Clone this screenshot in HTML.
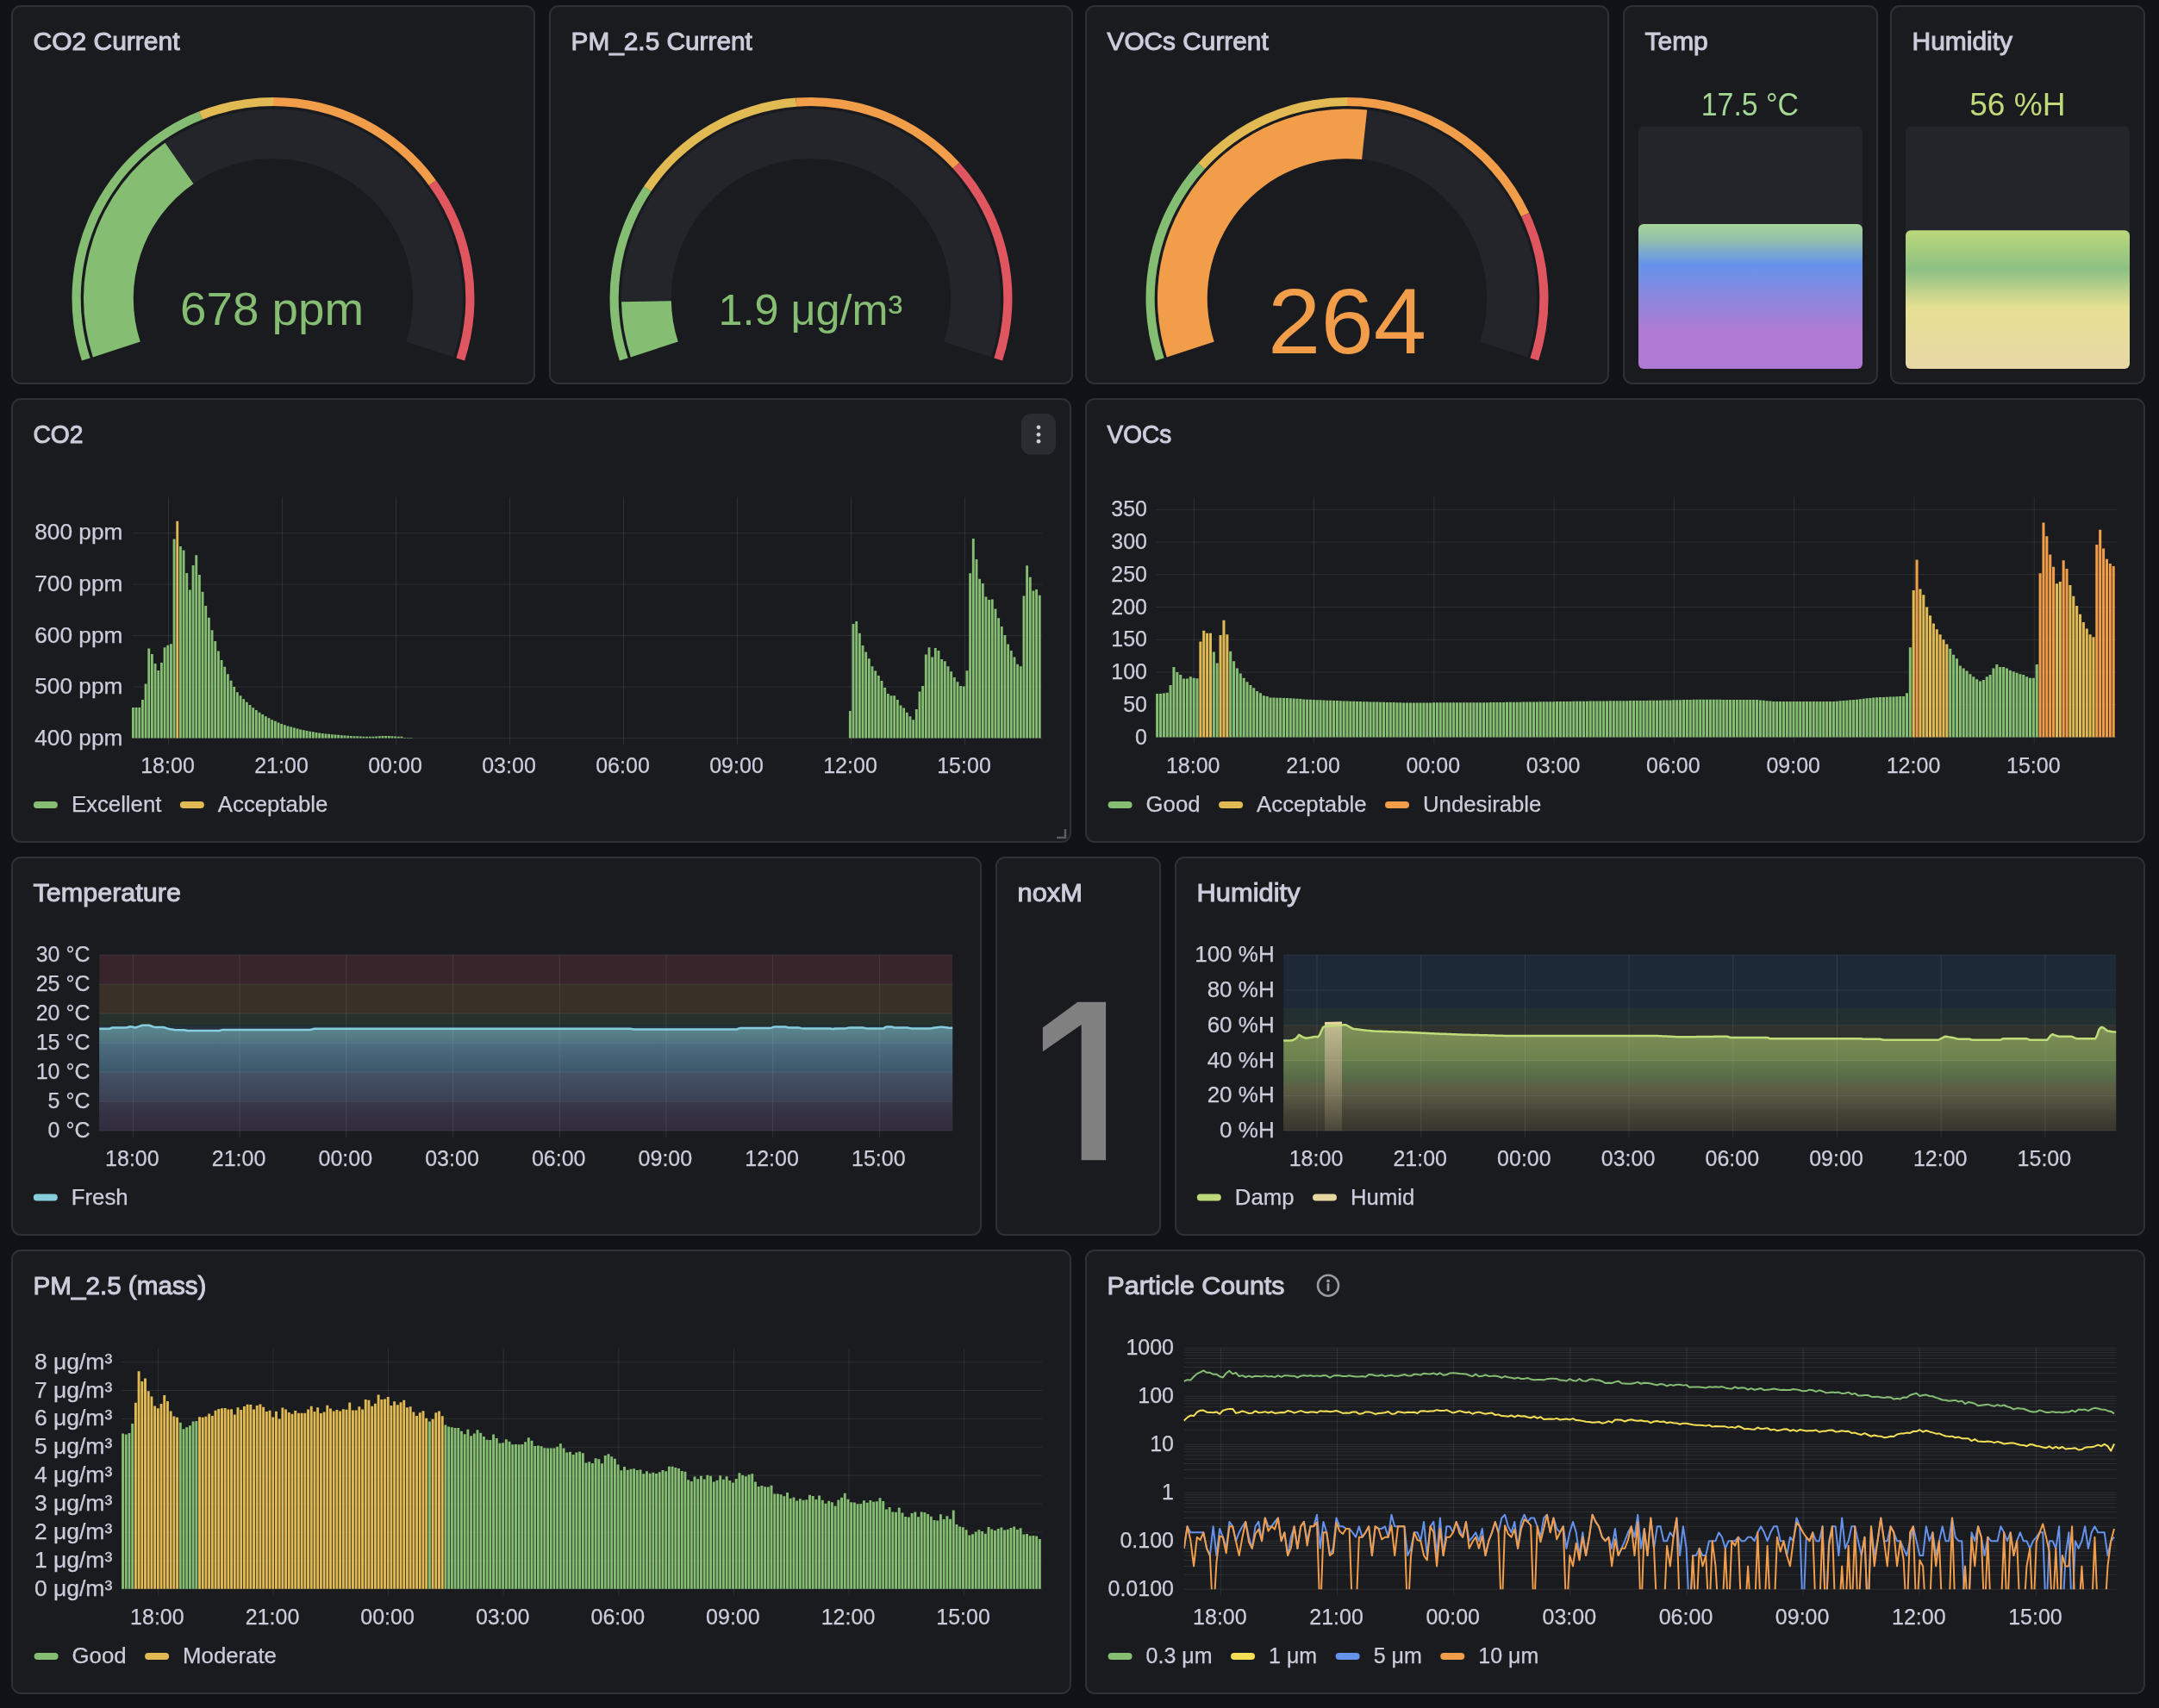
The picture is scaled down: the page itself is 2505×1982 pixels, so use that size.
<!DOCTYPE html><html><head><meta charset="utf-8"><title>Dashboard</title><style>html,body{margin:0;padding:0;background:#111217;width:2505px;height:1982px;overflow:hidden}svg{display:block;will-change:transform}</style></head><body><svg width="2505" height="1982" viewBox="0 0 2505 1982" font-family="Liberation Sans, sans-serif">
<defs>
<style>.t{stroke:#ccccdb;stroke-width:1px}.a{stroke:#ccccdb;stroke-width:0.25px}</style>
<linearGradient id="gTemp" x1="0" y1="0" x2="0" y2="1"><stop offset="0" stop-color="#a8d597"/><stop offset="0.12" stop-color="#8fbcaf"/><stop offset="0.2" stop-color="#78a8d0"/><stop offset="0.28" stop-color="#6592eb"/><stop offset="0.47" stop-color="#8589df"/><stop offset="0.74" stop-color="#af7ad3"/><stop offset="1" stop-color="#af7ad3"/></linearGradient>
<linearGradient id="gHum" x1="0" y1="0" x2="0" y2="1"><stop offset="0" stop-color="#bcd87a"/><stop offset="0.28" stop-color="#8cc083"/><stop offset="0.56" stop-color="#e6e093"/><stop offset="1" stop-color="#e8d7a6"/></linearGradient>
</defs>
<rect width="2505" height="1982" fill="#111217"/>
<rect x="14" y="7" width="606" height="438" rx="10" fill="#191b1f" stroke="#2e3036" stroke-width="2"/>
<text x="38.5" y="58.3" font-size="29.5" fill="#ccccdb" textLength="170" lengthAdjust="spacingAndGlyphs" class="t">CO2 Current</text>
<rect x="638" y="7" width="606" height="438" rx="10" fill="#191b1f" stroke="#2e3036" stroke-width="2"/>
<text x="662.5" y="58.3" font-size="29.5" fill="#ccccdb" textLength="210.4" lengthAdjust="spacingAndGlyphs" class="t">PM_2.5 Current</text>
<rect x="1260" y="7" width="606" height="438" rx="10" fill="#191b1f" stroke="#2e3036" stroke-width="2"/>
<text x="1284.5" y="58.3" font-size="29.5" fill="#ccccdb" textLength="187.2" lengthAdjust="spacingAndGlyphs" class="t">VOCs Current</text>
<rect x="1884" y="7" width="294" height="438" rx="10" fill="#191b1f" stroke="#2e3036" stroke-width="2"/>
<text x="1908.5" y="58.3" font-size="29.5" fill="#ccccdb" textLength="73.28" lengthAdjust="spacingAndGlyphs" class="t">Temp</text>
<rect x="2194" y="7" width="294" height="438" rx="10" fill="#191b1f" stroke="#2e3036" stroke-width="2"/>
<text x="2218.5" y="58.3" font-size="29.5" fill="#ccccdb" textLength="116.55" lengthAdjust="spacingAndGlyphs" class="t">Humidity</text>
<path d="M94.93 418.56A233.5 233.5 0 0 1 231.04 129.3L234.8 138.78A223.3 223.3 0 0 0 104.63 415.4Z" fill="#85bd72"/>
<path d="M231.04 129.3A233.5 233.5 0 0 1 317 112.9L317 123.1A223.3 223.3 0 0 0 234.8 138.78Z" fill="#e2ba53"/>
<path d="M317 112.9A233.5 233.5 0 0 1 505.91 209.15L497.65 215.15A223.3 223.3 0 0 0 317 123.1Z" fill="#f19d49"/>
<path d="M505.91 209.15A233.5 233.5 0 0 1 539.07 418.56L529.37 415.4A223.3 223.3 0 0 0 497.65 215.15Z" fill="#e05660"/>
<path d="M107.77 414.38A220 220 0 1 1 526.23 414.38L471.26 396.52A162.2 162.2 0 1 0 162.74 396.52Z" fill="#23252a"/>
<path d="M107.77 414.38A220 220 0 0 1 191.52 165.69L224.49 213.17A162.2 162.2 0 0 0 162.74 396.52Z" fill="#85bd72"/>
<text x="315.6" y="376.9" font-size="54" fill="#85bd72" text-anchor="middle" textLength="213" lengthAdjust="spacingAndGlyphs">678 ppm</text>
<path d="M718.93 418.56A233.5 233.5 0 0 1 747.06 216.37L755.53 222.05A223.3 223.3 0 0 0 728.63 415.4Z" fill="#85bd72"/>
<path d="M747.06 216.37A233.5 233.5 0 0 1 923.41 113.56L924.18 123.73A223.3 223.3 0 0 0 755.53 222.05Z" fill="#e2ba53"/>
<path d="M923.41 113.56A233.5 233.5 0 0 1 1113.21 188.71L1105.69 195.6A223.3 223.3 0 0 0 924.18 123.73Z" fill="#f19d49"/>
<path d="M1113.21 188.71A233.5 233.5 0 0 1 1163.07 418.56L1153.37 415.4A223.3 223.3 0 0 0 1105.69 195.6Z" fill="#e05660"/>
<path d="M731.77 414.38A220 220 0 1 1 1150.23 414.38L1095.26 396.52A162.2 162.2 0 1 0 786.74 396.52Z" fill="#23252a"/>
<path d="M731.77 414.38A220 220 0 0 1 721.03 350.24L778.82 349.23A162.2 162.2 0 0 0 786.74 396.52Z" fill="#85bd72"/>
<text x="940.3" y="377.2" font-size="49.6" fill="#85bd72" text-anchor="middle" textLength="213.8" lengthAdjust="spacingAndGlyphs">1.9 μg/m³</text>
<path d="M1340.93 418.56A233.5 233.5 0 0 1 1390.2 189.36L1397.75 196.22A223.3 223.3 0 0 0 1350.63 415.4Z" fill="#85bd72"/>
<path d="M1390.2 189.36A233.5 233.5 0 0 1 1563 112.9L1563 123.1A223.3 223.3 0 0 0 1397.75 196.22Z" fill="#e2ba53"/>
<path d="M1563 112.9A233.5 233.5 0 0 1 1774.28 246.98L1765.05 251.32A223.3 223.3 0 0 0 1563 123.1Z" fill="#f19d49"/>
<path d="M1774.28 246.98A233.5 233.5 0 0 1 1785.07 418.56L1775.37 415.4A223.3 223.3 0 0 0 1765.05 251.32Z" fill="#e05660"/>
<path d="M1353.77 414.38A220 220 0 1 1 1772.23 414.38L1717.26 396.52A162.2 162.2 0 1 0 1408.74 396.52Z" fill="#23252a"/>
<path d="M1353.77 414.38A220 220 0 0 1 1586.18 127.62L1580.09 185.1A162.2 162.2 0 0 0 1408.74 396.52Z" fill="#f19d49"/>
<text x="1563.1" y="410" font-size="106.7" fill="#f19d49" text-anchor="middle" textLength="184" lengthAdjust="spacingAndGlyphs">264</text>
<rect x="1901" y="146.5" width="260" height="281.5" rx="6" fill="#23252a"/>
<rect x="1901" y="260" width="260" height="168" rx="6" fill="url(#gTemp)"/>
<text x="2030.4" y="133.9" font-size="37.5" fill="#a5d794" text-anchor="middle" textLength="113.2" lengthAdjust="spacingAndGlyphs">17.5 °C</text>
<rect x="2211" y="146.5" width="260" height="281.5" rx="6" fill="#23252a"/>
<rect x="2211" y="267.2" width="260" height="160.8" rx="6" fill="url(#gHum)"/>
<text x="2340.9" y="133.9" font-size="37.5" fill="#c0d97a" text-anchor="middle" textLength="111.4" lengthAdjust="spacingAndGlyphs">56 %H</text>
<rect x="14" y="463" width="1228" height="514" rx="10" fill="#191b1f" stroke="#2e3036" stroke-width="2"/>
<text x="38.5" y="514.3" font-size="29.5" fill="#ccccdb" textLength="58" lengthAdjust="spacingAndGlyphs" class="t">CO2</text>
<line x1="153.5" y1="618.48" x2="1209" y2="618.48" stroke="rgba(240,250,255,0.09)" stroke-width="1"/>
<text x="142.4" y="626.48" font-size="25" fill="#ccccdb" text-anchor="end" textLength="102.18" lengthAdjust="spacingAndGlyphs" class="a">800 ppm</text>
<line x1="153.5" y1="678.01" x2="1209" y2="678.01" stroke="rgba(240,250,255,0.09)" stroke-width="1"/>
<text x="142.4" y="686.01" font-size="25" fill="#ccccdb" text-anchor="end" textLength="102.18" lengthAdjust="spacingAndGlyphs" class="a">700 ppm</text>
<line x1="153.5" y1="737.54" x2="1209" y2="737.54" stroke="rgba(240,250,255,0.09)" stroke-width="1"/>
<text x="142.4" y="745.54" font-size="25" fill="#ccccdb" text-anchor="end" textLength="102.18" lengthAdjust="spacingAndGlyphs" class="a">600 ppm</text>
<line x1="153.5" y1="797.07" x2="1209" y2="797.07" stroke="rgba(240,250,255,0.09)" stroke-width="1"/>
<text x="142.4" y="805.07" font-size="25" fill="#ccccdb" text-anchor="end" textLength="102.18" lengthAdjust="spacingAndGlyphs" class="a">500 ppm</text>
<line x1="153.5" y1="856.6" x2="1209" y2="856.6" stroke="rgba(240,250,255,0.09)" stroke-width="1"/>
<text x="142.4" y="864.6" font-size="25" fill="#ccccdb" text-anchor="end" textLength="102.18" lengthAdjust="spacingAndGlyphs" class="a">400 ppm</text>
<line x1="195.5" y1="576.8" x2="195.5" y2="864.1" stroke="rgba(240,250,255,0.09)" stroke-width="1"/>
<text x="194.5" y="897.2" font-size="25" fill="#ccccdb" text-anchor="middle" class="a">18:00</text>
<line x1="327.5" y1="576.8" x2="327.5" y2="864.1" stroke="rgba(240,250,255,0.09)" stroke-width="1"/>
<text x="326.5" y="897.2" font-size="25" fill="#ccccdb" text-anchor="middle" class="a">21:00</text>
<line x1="459.5" y1="576.8" x2="459.5" y2="864.1" stroke="rgba(240,250,255,0.09)" stroke-width="1"/>
<text x="458.5" y="897.2" font-size="25" fill="#ccccdb" text-anchor="middle" class="a">00:00</text>
<line x1="591.5" y1="576.8" x2="591.5" y2="864.1" stroke="rgba(240,250,255,0.09)" stroke-width="1"/>
<text x="590.5" y="897.2" font-size="25" fill="#ccccdb" text-anchor="middle" class="a">03:00</text>
<line x1="723.5" y1="576.8" x2="723.5" y2="864.1" stroke="rgba(240,250,255,0.09)" stroke-width="1"/>
<text x="722.5" y="897.2" font-size="25" fill="#ccccdb" text-anchor="middle" class="a">06:00</text>
<line x1="855.5" y1="576.8" x2="855.5" y2="864.1" stroke="rgba(240,250,255,0.09)" stroke-width="1"/>
<text x="854.5" y="897.2" font-size="25" fill="#ccccdb" text-anchor="middle" class="a">09:00</text>
<line x1="987.5" y1="576.8" x2="987.5" y2="864.1" stroke="rgba(240,250,255,0.09)" stroke-width="1"/>
<text x="986.5" y="897.2" font-size="25" fill="#ccccdb" text-anchor="middle" class="a">12:00</text>
<line x1="1119.5" y1="576.8" x2="1119.5" y2="864.1" stroke="rgba(240,250,255,0.09)" stroke-width="1"/>
<text x="1118.5" y="897.2" font-size="25" fill="#ccccdb" text-anchor="middle" class="a">15:00</text>
<path d="M153 821.06h2.86V856.6h-2.86zM156.66 820.88h2.86V856.6h-2.86zM160.33 820.88h2.86V856.6h-2.86zM163.99 811.95h2.86V856.6h-2.86zM167.66 793.5h2.86V856.6h-2.86zM171.32 752.42h2.86V856.6h-2.86zM174.99 758.97h2.86V856.6h-2.86zM178.65 769.98h2.86V856.6h-2.86zM182.32 778.02h2.86V856.6h-2.86zM185.98 769.09h2.86V856.6h-2.86zM189.65 751.23h2.86V856.6h-2.86zM193.31 748.85h2.86V856.6h-2.86zM196.98 747.36h2.86V856.6h-2.86zM200.64 625.62h2.86V856.6h-2.86zM207.97 633.96h2.86V856.6h-2.86zM211.64 638.42h2.86V856.6h-2.86zM215.3 664.91h2.86V856.6h-2.86zM218.97 684.56h2.86V856.6h-2.86zM222.63 655.98h2.86V856.6h-2.86zM226.3 644.32h2.86V856.6h-2.86zM229.96 666.94h2.86V856.6h-2.86zM233.63 686.64h2.86V856.6h-2.86zM237.29 703.01h2.86V856.6h-2.86zM240.96 716.7h2.86V856.6h-2.86zM244.62 731.23h2.86V856.6h-2.86zM248.29 744.09h2.86V856.6h-2.86zM251.95 755.4h2.86V856.6h-2.86zM255.62 766.11h2.86V856.6h-2.86zM259.28 773.85h2.86V856.6h-2.86zM262.95 782.19h2.86V856.6h-2.86zM266.61 789.63h2.86V856.6h-2.86zM270.28 797.07h2.86V856.6h-2.86zM273.94 803.14h2.86V856.6h-2.86zM277.61 807.19h2.86V856.6h-2.86zM281.27 811.14h2.86V856.6h-2.86zM284.94 814.78h2.86V856.6h-2.86zM288.6 818.12h2.86V856.6h-2.86zM292.27 821.2h2.86V856.6h-2.86zM295.93 824.03h2.86V856.6h-2.86zM299.6 826.63h2.86V856.6h-2.86zM303.26 829.03h2.86V856.6h-2.86zM306.93 831.23h2.86V856.6h-2.86zM310.59 833.26h2.86V856.6h-2.86zM314.26 835.13h2.86V856.6h-2.86zM317.92 836.84h2.86V856.6h-2.86zM321.59 838.42h2.86V856.6h-2.86zM325.25 839.88h2.86V856.6h-2.86zM328.92 841.21h2.86V856.6h-2.86zM332.58 842.44h2.86V856.6h-2.86zM336.25 843.58h2.86V856.6h-2.86zM339.91 844.62h2.86V856.6h-2.86zM343.58 845.58h2.86V856.6h-2.86zM347.24 846.46h2.86V856.6h-2.86zM350.91 847.27h2.86V856.6h-2.86zM354.57 848.01h2.86V856.6h-2.86zM358.24 848.7h2.86V856.6h-2.86zM361.9 849.33h2.86V856.6h-2.86zM365.57 849.91h2.86V856.6h-2.86zM369.23 850.45h2.86V856.6h-2.86zM372.9 850.94h2.86V856.6h-2.86zM376.56 851.39h2.86V856.6h-2.86zM380.23 851.81h2.86V856.6h-2.86zM383.89 852.19h2.86V856.6h-2.86zM387.56 852.54h2.86V856.6h-2.86zM391.22 852.87h2.86V856.6h-2.86zM394.89 853.17h2.86V856.6h-2.86zM398.55 853.44h2.86V856.6h-2.86zM402.22 853.69h2.86V856.6h-2.86zM405.88 853.93h2.86V856.6h-2.86zM409.55 854.14h2.86V856.6h-2.86zM413.21 854.34h2.86V856.6h-2.86zM416.88 854.52h2.86V856.6h-2.86zM420.54 854.68h2.86V856.6h-2.86zM424.2 854.84h2.86V856.6h-2.86zM427.87 854.81h2.86V856.6h-2.86zM431.53 854.64h2.86V856.6h-2.86zM435.2 854.46h2.86V856.6h-2.86zM438.86 854.28h2.86V856.6h-2.86zM442.53 854.1h2.86V856.6h-2.86zM446.19 853.92h2.86V856.6h-2.86zM449.86 854.1h2.86V856.6h-2.86zM453.52 854.28h2.86V856.6h-2.86zM457.19 854.46h2.86V856.6h-2.86zM460.85 854.64h2.86V856.6h-2.86zM464.52 854.81h2.86V856.6h-2.86zM468.18 855.95h2.86V856.6h-2.86zM471.85 856h2.86V856.6h-2.86zM475.51 856.05h2.86V856.6h-2.86zM984.94 825.05h2.86V856.6h-2.86zM988.6 724.03h2.86V856.6h-2.86zM992.27 720.99h2.86V856.6h-2.86zM995.93 734.74h2.86V856.6h-2.86zM999.6 748.97h2.86V856.6h-2.86zM1003.26 756.59h2.86V856.6h-2.86zM1006.93 764.33h2.86V856.6h-2.86zM1010.59 773.26h2.86V856.6h-2.86zM1014.26 778.62h2.86V856.6h-2.86zM1017.92 783.97h2.86V856.6h-2.86zM1021.59 789.93h2.86V856.6h-2.86zM1025.25 797.96h2.86V856.6h-2.86zM1028.92 804.99h2.86V856.6h-2.86zM1032.58 807.19h2.86V856.6h-2.86zM1036.25 807.19h2.86V856.6h-2.86zM1039.91 811.95h2.86V856.6h-2.86zM1043.58 818.5h2.86V856.6h-2.86zM1047.24 821.48h2.86V856.6h-2.86zM1050.91 826.84h2.86V856.6h-2.86zM1054.57 831.18h2.86V856.6h-2.86zM1058.24 835.17h2.86V856.6h-2.86zM1061.9 822.97h2.86V856.6h-2.86zM1065.57 802.43h2.86V856.6h-2.86zM1069.23 795.88h2.86V856.6h-2.86zM1072.9 759.57h2.86V856.6h-2.86zM1076.56 751.23h2.86V856.6h-2.86zM1080.23 762.54h2.86V856.6h-2.86zM1083.89 751.95h2.86V856.6h-2.86zM1087.56 755.04h2.86V856.6h-2.86zM1091.22 764.92h2.86V856.6h-2.86zM1094.89 767.31h2.86V856.6h-2.86zM1098.55 773.26h2.86V856.6h-2.86zM1102.22 779.21h2.86V856.6h-2.86zM1105.88 785.88h2.86V856.6h-2.86zM1109.55 791.3h2.86V856.6h-2.86zM1113.21 795.88h2.86V856.6h-2.86zM1116.88 796.47h2.86V856.6h-2.86zM1120.54 778.26h2.86V856.6h-2.86zM1124.21 665.21h2.86V856.6h-2.86zM1127.87 625.03h2.86V856.6h-2.86zM1131.54 649.02h2.86V856.6h-2.86zM1135.2 671.7h2.86V856.6h-2.86zM1138.87 677h2.86V856.6h-2.86zM1142.53 692.42h2.86V856.6h-2.86zM1146.2 695.99h2.86V856.6h-2.86zM1149.86 695.45h2.86V856.6h-2.86zM1153.53 706.58h2.86V856.6h-2.86zM1157.19 717.3h2.86V856.6h-2.86zM1160.86 726.94h2.86V856.6h-2.86zM1164.52 736.94h2.86V856.6h-2.86zM1168.19 747.42h2.86V856.6h-2.86zM1171.85 755.04h2.86V856.6h-2.86zM1175.52 762.54h2.86V856.6h-2.86zM1179.18 770.7h2.86V856.6h-2.86zM1182.85 773.14h2.86V856.6h-2.86zM1186.51 691.52h2.86V856.6h-2.86zM1190.18 656.22h2.86V856.6h-2.86zM1193.84 669.79h2.86V856.6h-2.86zM1197.51 685.51h2.86V856.6h-2.86zM1201.17 683.96h2.86V856.6h-2.86zM1204.84 690.63h2.86V856.6h-2.86z" fill="#85bd72"/>
<path d="M204.31 604.79h2.86V856.6h-2.86z" fill="#e2ba53"/>
<rect x="38.9" y="930" width="28" height="8" rx="4" fill="#85bd72"/>
<text x="82.9" y="942.3" font-size="25" fill="#ccccdb" textLength="104.48" lengthAdjust="spacingAndGlyphs" class="a">Excellent</text>
<rect x="208.88" y="930" width="28" height="8" rx="4" fill="#e2ba53"/>
<text x="252.88" y="942.3" font-size="25" fill="#ccccdb" textLength="127.41" lengthAdjust="spacingAndGlyphs" class="a">Acceptable</text>
<rect x="1185" y="480" width="40" height="47.6" rx="11" fill="#2b2c32"/>
<circle cx="1205" cy="495.8" r="2.4" fill="#ccccdb"/>
<circle cx="1205" cy="504.3" r="2.4" fill="#ccccdb"/>
<circle cx="1205" cy="512.2" r="2.4" fill="#ccccdb"/>
<path d="M1236 962v10h-10" fill="none" stroke="#5a5c63" stroke-width="2.5"/>
<rect x="1260" y="463" width="1228" height="514" rx="10" fill="#191b1f" stroke="#2e3036" stroke-width="2"/>
<text x="1284.5" y="514.3" font-size="29.5" fill="#ccccdb" textLength="74.7" lengthAdjust="spacingAndGlyphs" class="t">VOCs</text>
<line x1="1341.1" y1="591.32" x2="2455.5" y2="591.32" stroke="rgba(240,250,255,0.09)" stroke-width="1"/>
<text x="1331" y="599.32" font-size="25" fill="#ccccdb" text-anchor="end" textLength="41.72" lengthAdjust="spacingAndGlyphs" class="a">350</text>
<line x1="1341.1" y1="629.06" x2="2455.5" y2="629.06" stroke="rgba(240,250,255,0.09)" stroke-width="1"/>
<text x="1331" y="637.06" font-size="25" fill="#ccccdb" text-anchor="end" textLength="41.72" lengthAdjust="spacingAndGlyphs" class="a">300</text>
<line x1="1341.1" y1="666.8" x2="2455.5" y2="666.8" stroke="rgba(240,250,255,0.09)" stroke-width="1"/>
<text x="1331" y="674.8" font-size="25" fill="#ccccdb" text-anchor="end" textLength="41.72" lengthAdjust="spacingAndGlyphs" class="a">250</text>
<line x1="1341.1" y1="704.54" x2="2455.5" y2="704.54" stroke="rgba(240,250,255,0.09)" stroke-width="1"/>
<text x="1331" y="712.54" font-size="25" fill="#ccccdb" text-anchor="end" textLength="41.72" lengthAdjust="spacingAndGlyphs" class="a">200</text>
<line x1="1341.1" y1="742.28" x2="2455.5" y2="742.28" stroke="rgba(240,250,255,0.09)" stroke-width="1"/>
<text x="1331" y="750.28" font-size="25" fill="#ccccdb" text-anchor="end" textLength="41.72" lengthAdjust="spacingAndGlyphs" class="a">150</text>
<line x1="1341.1" y1="780.02" x2="2455.5" y2="780.02" stroke="rgba(240,250,255,0.09)" stroke-width="1"/>
<text x="1331" y="788.02" font-size="25" fill="#ccccdb" text-anchor="end" textLength="41.72" lengthAdjust="spacingAndGlyphs" class="a">100</text>
<line x1="1341.1" y1="817.76" x2="2455.5" y2="817.76" stroke="rgba(240,250,255,0.09)" stroke-width="1"/>
<text x="1331" y="825.76" font-size="25" fill="#ccccdb" text-anchor="end" textLength="27.81" lengthAdjust="spacingAndGlyphs" class="a">50</text>
<line x1="1341.1" y1="855.5" x2="2455.5" y2="855.5" stroke="rgba(240,250,255,0.09)" stroke-width="1"/>
<text x="1331" y="863.5" font-size="25" fill="#ccccdb" text-anchor="end" textLength="13.91" lengthAdjust="spacingAndGlyphs" class="a">0</text>
<line x1="1385.2" y1="576.8" x2="1385.2" y2="863" stroke="rgba(240,250,255,0.09)" stroke-width="1"/>
<text x="1384.2" y="897.2" font-size="25" fill="#ccccdb" text-anchor="middle" class="a">18:00</text>
<line x1="1524.5" y1="576.8" x2="1524.5" y2="863" stroke="rgba(240,250,255,0.09)" stroke-width="1"/>
<text x="1523.5" y="897.2" font-size="25" fill="#ccccdb" text-anchor="middle" class="a">21:00</text>
<line x1="1663.8" y1="576.8" x2="1663.8" y2="863" stroke="rgba(240,250,255,0.09)" stroke-width="1"/>
<text x="1662.8" y="897.2" font-size="25" fill="#ccccdb" text-anchor="middle" class="a">00:00</text>
<line x1="1803.1" y1="576.8" x2="1803.1" y2="863" stroke="rgba(240,250,255,0.09)" stroke-width="1"/>
<text x="1802.1" y="897.2" font-size="25" fill="#ccccdb" text-anchor="middle" class="a">03:00</text>
<line x1="1942.4" y1="576.8" x2="1942.4" y2="863" stroke="rgba(240,250,255,0.09)" stroke-width="1"/>
<text x="1941.4" y="897.2" font-size="25" fill="#ccccdb" text-anchor="middle" class="a">06:00</text>
<line x1="2081.7" y1="576.8" x2="2081.7" y2="863" stroke="rgba(240,250,255,0.09)" stroke-width="1"/>
<text x="2080.7" y="897.2" font-size="25" fill="#ccccdb" text-anchor="middle" class="a">09:00</text>
<line x1="2221" y1="576.8" x2="2221" y2="863" stroke="rgba(240,250,255,0.09)" stroke-width="1"/>
<text x="2220" y="897.2" font-size="25" fill="#ccccdb" text-anchor="middle" class="a">12:00</text>
<line x1="2360.3" y1="576.8" x2="2360.3" y2="863" stroke="rgba(240,250,255,0.09)" stroke-width="1"/>
<text x="2359.3" y="897.2" font-size="25" fill="#ccccdb" text-anchor="middle" class="a">15:00</text>
<path d="M1341.1 804.93h3.07V855.5h-3.07zM1344.97 804.93h3.07V855.5h-3.07zM1348.83 804.55h3.07V855.5h-3.07zM1352.7 803.8h3.07V855.5h-3.07zM1356.56 795.12h3.07V855.5h-3.07zM1360.43 773.98h3.07V855.5h-3.07zM1364.3 780.02h3.07V855.5h-3.07zM1368.16 783.04h3.07V855.5h-3.07zM1372.03 787.57h3.07V855.5h-3.07zM1375.89 787.57h3.07V855.5h-3.07zM1379.76 785.3h3.07V855.5h-3.07zM1383.63 786.81h3.07V855.5h-3.07zM1387.49 787.19h3.07V855.5h-3.07zM1406.82 756.62h3.07V855.5h-3.07zM1410.69 769.45h3.07V855.5h-3.07zM1426.15 755.87h3.07V855.5h-3.07zM1430.02 767.19h3.07V855.5h-3.07zM1433.88 775.49h3.07V855.5h-3.07zM1437.75 781.53h3.07V855.5h-3.07zM1441.62 786.81h3.07V855.5h-3.07zM1445.48 791.34h3.07V855.5h-3.07zM1449.35 795.12h3.07V855.5h-3.07zM1453.21 798.14h3.07V855.5h-3.07zM1457.08 801.91h3.07V855.5h-3.07zM1460.95 804.17h3.07V855.5h-3.07zM1464.81 807.19h3.07V855.5h-3.07zM1468.68 807.95h3.07V855.5h-3.07zM1472.54 809.46h3.07V855.5h-3.07zM1476.41 809.58h3.07V855.5h-3.07zM1480.27 809.71h3.07V855.5h-3.07zM1484.14 809.83h3.07V855.5h-3.07zM1488.01 809.96h3.07V855.5h-3.07zM1491.87 810.09h3.07V855.5h-3.07zM1495.74 810.21h3.07V855.5h-3.07zM1499.6 810.51h3.07V855.5h-3.07zM1503.47 810.82h3.07V855.5h-3.07zM1507.34 811.12h3.07V855.5h-3.07zM1511.2 811.42h3.07V855.5h-3.07zM1515.07 811.72h3.07V855.5h-3.07zM1518.93 811.87h3.07V855.5h-3.07zM1522.8 812.02h3.07V855.5h-3.07zM1526.67 812.17h3.07V855.5h-3.07zM1530.53 812.33h3.07V855.5h-3.07zM1534.4 812.48h3.07V855.5h-3.07zM1538.26 812.63h3.07V855.5h-3.07zM1542.13 812.78h3.07V855.5h-3.07zM1546 812.93h3.07V855.5h-3.07zM1549.86 813.08h3.07V855.5h-3.07zM1553.73 813.23h3.07V855.5h-3.07zM1557.59 813.38h3.07V855.5h-3.07zM1561.46 813.53h3.07V855.5h-3.07zM1565.33 813.68h3.07V855.5h-3.07zM1569.19 813.84h3.07V855.5h-3.07zM1573.06 813.99h3.07V855.5h-3.07zM1576.92 814.09h3.07V855.5h-3.07zM1580.79 814.19h3.07V855.5h-3.07zM1584.66 814.29h3.07V855.5h-3.07zM1588.52 814.39h3.07V855.5h-3.07zM1592.39 814.49h3.07V855.5h-3.07zM1596.25 814.59h3.07V855.5h-3.07zM1600.12 814.69h3.07V855.5h-3.07zM1603.99 814.79h3.07V855.5h-3.07zM1607.85 814.89h3.07V855.5h-3.07zM1611.72 814.99h3.07V855.5h-3.07zM1615.58 815.09h3.07V855.5h-3.07zM1619.45 815.19h3.07V855.5h-3.07zM1623.32 815.29h3.07V855.5h-3.07zM1627.18 815.39h3.07V855.5h-3.07zM1631.05 815.5h3.07V855.5h-3.07zM1634.91 815.48h3.07V855.5h-3.07zM1638.78 815.47h3.07V855.5h-3.07zM1642.65 815.45h3.07V855.5h-3.07zM1646.51 815.44h3.07V855.5h-3.07zM1650.38 815.42h3.07V855.5h-3.07zM1654.24 815.41h3.07V855.5h-3.07zM1658.11 815.39h3.07V855.5h-3.07zM1661.98 815.37h3.07V855.5h-3.07zM1665.84 815.36h3.07V855.5h-3.07zM1669.71 815.34h3.07V855.5h-3.07zM1673.57 815.33h3.07V855.5h-3.07zM1677.44 815.31h3.07V855.5h-3.07zM1681.31 815.3h3.07V855.5h-3.07zM1685.17 815.28h3.07V855.5h-3.07zM1689.04 815.27h3.07V855.5h-3.07zM1692.9 815.25h3.07V855.5h-3.07zM1696.77 815.24h3.07V855.5h-3.07zM1700.64 815.22h3.07V855.5h-3.07zM1704.5 815.21h3.07V855.5h-3.07zM1708.37 815.19h3.07V855.5h-3.07zM1712.23 815.18h3.07V855.5h-3.07zM1716.1 815.16h3.07V855.5h-3.07zM1719.97 815.15h3.07V855.5h-3.07zM1723.83 815.13h3.07V855.5h-3.07zM1727.7 815.12h3.07V855.5h-3.07zM1731.56 815.07h3.07V855.5h-3.07zM1735.43 815.02h3.07V855.5h-3.07zM1739.3 814.97h3.07V855.5h-3.07zM1743.16 814.92h3.07V855.5h-3.07zM1747.03 814.87h3.07V855.5h-3.07zM1750.89 814.82h3.07V855.5h-3.07zM1754.76 814.77h3.07V855.5h-3.07zM1758.62 814.72h3.07V855.5h-3.07zM1762.49 814.67h3.07V855.5h-3.07zM1766.36 814.62h3.07V855.5h-3.07zM1770.22 814.56h3.07V855.5h-3.07zM1774.09 814.51h3.07V855.5h-3.07zM1777.95 814.46h3.07V855.5h-3.07zM1781.82 814.41h3.07V855.5h-3.07zM1785.69 814.36h3.07V855.5h-3.07zM1789.55 814.31h3.07V855.5h-3.07zM1793.42 814.26h3.07V855.5h-3.07zM1797.28 814.21h3.07V855.5h-3.07zM1801.15 814.16h3.07V855.5h-3.07zM1805.02 814.11h3.07V855.5h-3.07zM1808.88 814.06h3.07V855.5h-3.07zM1812.75 814.01h3.07V855.5h-3.07zM1816.61 813.96h3.07V855.5h-3.07zM1820.48 813.91h3.07V855.5h-3.07zM1824.35 813.86h3.07V855.5h-3.07zM1828.21 813.81h3.07V855.5h-3.07zM1832.08 813.76h3.07V855.5h-3.07zM1835.94 813.71h3.07V855.5h-3.07zM1839.81 813.66h3.07V855.5h-3.07zM1843.68 813.61h3.07V855.5h-3.07zM1847.54 813.57h3.07V855.5h-3.07zM1851.41 813.52h3.07V855.5h-3.07zM1855.27 813.48h3.07V855.5h-3.07zM1859.14 813.44h3.07V855.5h-3.07zM1863.01 813.4h3.07V855.5h-3.07zM1866.87 813.36h3.07V855.5h-3.07zM1870.74 813.32h3.07V855.5h-3.07zM1874.6 813.27h3.07V855.5h-3.07zM1878.47 813.23h3.07V855.5h-3.07zM1882.34 813.19h3.07V855.5h-3.07zM1886.2 813.15h3.07V855.5h-3.07zM1890.07 813.11h3.07V855.5h-3.07zM1893.93 813.06h3.07V855.5h-3.07zM1897.8 813.02h3.07V855.5h-3.07zM1901.67 812.98h3.07V855.5h-3.07zM1905.53 812.94h3.07V855.5h-3.07zM1909.4 812.9h3.07V855.5h-3.07zM1913.26 812.85h3.07V855.5h-3.07zM1917.13 812.78h3.07V855.5h-3.07zM1921 812.7h3.07V855.5h-3.07zM1924.86 812.63h3.07V855.5h-3.07zM1928.73 812.55h3.07V855.5h-3.07zM1932.59 812.48h3.07V855.5h-3.07zM1936.46 812.4h3.07V855.5h-3.07zM1940.33 812.33h3.07V855.5h-3.07zM1944.19 812.25h3.07V855.5h-3.07zM1948.06 812.17h3.07V855.5h-3.07zM1951.92 812.1h3.07V855.5h-3.07zM1955.79 812.02h3.07V855.5h-3.07zM1959.66 811.95h3.07V855.5h-3.07zM1963.52 811.87h3.07V855.5h-3.07zM1967.39 811.8h3.07V855.5h-3.07zM1971.25 811.72h3.07V855.5h-3.07zM1975.12 811.74h3.07V855.5h-3.07zM1978.99 811.77h3.07V855.5h-3.07zM1982.85 811.79h3.07V855.5h-3.07zM1986.72 811.81h3.07V855.5h-3.07zM1990.58 811.83h3.07V855.5h-3.07zM1994.45 811.85h3.07V855.5h-3.07zM1998.32 811.88h3.07V855.5h-3.07zM2002.18 811.9h3.07V855.5h-3.07zM2006.05 811.92h3.07V855.5h-3.07zM2009.91 811.94h3.07V855.5h-3.07zM2013.78 811.97h3.07V855.5h-3.07zM2017.65 811.99h3.07V855.5h-3.07zM2021.51 812.01h3.07V855.5h-3.07zM2025.38 812.03h3.07V855.5h-3.07zM2029.24 812.05h3.07V855.5h-3.07zM2033.11 812.08h3.07V855.5h-3.07zM2036.97 812.1h3.07V855.5h-3.07zM2040.84 812.48h3.07V855.5h-3.07zM2044.71 812.85h3.07V855.5h-3.07zM2048.57 813.23h3.07V855.5h-3.07zM2052.44 813.61h3.07V855.5h-3.07zM2056.3 813.99h3.07V855.5h-3.07zM2060.17 813.99h3.07V855.5h-3.07zM2064.04 813.99h3.07V855.5h-3.07zM2067.9 813.99h3.07V855.5h-3.07zM2071.77 813.99h3.07V855.5h-3.07zM2075.63 813.99h3.07V855.5h-3.07zM2079.5 813.99h3.07V855.5h-3.07zM2083.37 813.99h3.07V855.5h-3.07zM2087.23 813.99h3.07V855.5h-3.07zM2091.1 813.99h3.07V855.5h-3.07zM2094.96 813.99h3.07V855.5h-3.07zM2098.83 813.99h3.07V855.5h-3.07zM2102.7 813.99h3.07V855.5h-3.07zM2106.56 813.99h3.07V855.5h-3.07zM2110.43 813.99h3.07V855.5h-3.07zM2114.29 813.99h3.07V855.5h-3.07zM2118.16 813.99h3.07V855.5h-3.07zM2122.03 813.99h3.07V855.5h-3.07zM2125.89 813.99h3.07V855.5h-3.07zM2129.76 813.66h3.07V855.5h-3.07zM2133.62 813.34h3.07V855.5h-3.07zM2137.49 813.02h3.07V855.5h-3.07zM2141.36 812.69h3.07V855.5h-3.07zM2145.22 812.37h3.07V855.5h-3.07zM2149.09 812.05h3.07V855.5h-3.07zM2152.95 811.72h3.07V855.5h-3.07zM2156.82 811.27h3.07V855.5h-3.07zM2160.69 810.82h3.07V855.5h-3.07zM2164.55 810.36h3.07V855.5h-3.07zM2168.42 809.91h3.07V855.5h-3.07zM2172.28 809.46h3.07V855.5h-3.07zM2176.15 809.29h3.07V855.5h-3.07zM2180.02 809.12h3.07V855.5h-3.07zM2183.88 808.95h3.07V855.5h-3.07zM2187.75 808.79h3.07V855.5h-3.07zM2191.61 808.62h3.07V855.5h-3.07zM2195.48 808.45h3.07V855.5h-3.07zM2199.35 808.28h3.07V855.5h-3.07zM2203.21 808.12h3.07V855.5h-3.07zM2207.08 807.95h3.07V855.5h-3.07zM2210.94 804.17h3.07V855.5h-3.07zM2214.81 751.34h3.07V855.5h-3.07zM2261.2 752.85h3.07V855.5h-3.07zM2265.07 759.64h3.07V855.5h-3.07zM2268.93 764.17h3.07V855.5h-3.07zM2272.8 772.47h3.07V855.5h-3.07zM2276.67 775.49h3.07V855.5h-3.07zM2280.53 778.51h3.07V855.5h-3.07zM2284.4 782.28h3.07V855.5h-3.07zM2288.26 785.3h3.07V855.5h-3.07zM2292.13 788.32h3.07V855.5h-3.07zM2296 790.59h3.07V855.5h-3.07zM2299.86 789.08h3.07V855.5h-3.07zM2303.73 785.3h3.07V855.5h-3.07zM2307.59 783.04h3.07V855.5h-3.07zM2311.46 775.49h3.07V855.5h-3.07zM2315.32 770.96h3.07V855.5h-3.07zM2319.19 773.98h3.07V855.5h-3.07zM2323.06 773.98h3.07V855.5h-3.07zM2326.92 775.49h3.07V855.5h-3.07zM2330.79 777.76h3.07V855.5h-3.07zM2334.65 779.27h3.07V855.5h-3.07zM2338.52 780.77h3.07V855.5h-3.07zM2342.39 782.28h3.07V855.5h-3.07zM2346.25 783.04h3.07V855.5h-3.07zM2350.12 785.3h3.07V855.5h-3.07zM2353.98 786.81h3.07V855.5h-3.07zM2357.85 786.81h3.07V855.5h-3.07zM2361.72 770.96h3.07V855.5h-3.07z" fill="#85bd72"/>
<path d="M1391.36 744.54h3.07V855.5h-3.07zM1395.22 731.71h3.07V855.5h-3.07zM1399.09 734.73h3.07V855.5h-3.07zM1402.96 734.73h3.07V855.5h-3.07zM1414.55 737h3.07V855.5h-3.07zM1418.42 719.64h3.07V855.5h-3.07zM1422.29 736.24h3.07V855.5h-3.07zM2218.68 684.92h3.07V855.5h-3.07zM2226.41 683.41h3.07V855.5h-3.07zM2230.27 690.2h3.07V855.5h-3.07zM2234.14 704.54h3.07V855.5h-3.07zM2238.01 714.35h3.07V855.5h-3.07zM2241.87 723.41h3.07V855.5h-3.07zM2245.74 730.2h3.07V855.5h-3.07zM2249.6 736.24h3.07V855.5h-3.07zM2253.47 742.28h3.07V855.5h-3.07zM2257.34 747.56h3.07V855.5h-3.07zM2384.91 677.37h3.07V855.5h-3.07zM2388.78 675.1h3.07V855.5h-3.07zM2400.38 678.88h3.07V855.5h-3.07zM2404.24 691.71h3.07V855.5h-3.07zM2408.11 703.03h3.07V855.5h-3.07zM2411.97 712.84h3.07V855.5h-3.07zM2415.84 721.9h3.07V855.5h-3.07zM2419.71 729.45h3.07V855.5h-3.07zM2423.57 736.24h3.07V855.5h-3.07zM2427.44 739.26h3.07V855.5h-3.07z" fill="#e2ba53"/>
<path d="M2222.54 649.44h3.07V855.5h-3.07zM2365.58 665.29h3.07V855.5h-3.07zM2369.45 606.42h3.07V855.5h-3.07zM2373.31 622.27h3.07V855.5h-3.07zM2377.18 643.4h3.07V855.5h-3.07zM2381.05 657.74h3.07V855.5h-3.07zM2392.64 650.19h3.07V855.5h-3.07zM2396.51 660.01h3.07V855.5h-3.07zM2431.3 632.08h3.07V855.5h-3.07zM2435.17 614.72h3.07V855.5h-3.07zM2439.04 636.61h3.07V855.5h-3.07zM2442.9 648.68h3.07V855.5h-3.07zM2446.77 653.97h3.07V855.5h-3.07zM2450.63 656.99h3.07V855.5h-3.07z" fill="#f19d49"/>
<rect x="1285.6" y="930" width="28" height="8" rx="4" fill="#85bd72"/>
<text x="1329.6" y="942.3" font-size="25" fill="#ccccdb" textLength="63.01" lengthAdjust="spacingAndGlyphs" class="a">Good</text>
<rect x="1414.11" y="930" width="28" height="8" rx="4" fill="#e2ba53"/>
<text x="1458.11" y="942.3" font-size="25" fill="#ccccdb" textLength="127.41" lengthAdjust="spacingAndGlyphs" class="a">Acceptable</text>
<rect x="1607.02" y="930" width="28" height="8" rx="4" fill="#f19d49"/>
<text x="1651.02" y="942.3" font-size="25" fill="#ccccdb" textLength="137.41" lengthAdjust="spacingAndGlyphs" class="a">Undesirable</text>
<rect x="14" y="995" width="1124" height="438" rx="10" fill="#191b1f" stroke="#2e3036" stroke-width="2"/>
<text x="38.5" y="1046.3" font-size="29.5" fill="#ccccdb" textLength="171.5" lengthAdjust="spacingAndGlyphs" class="t">Temperature</text>
<rect x="115.2" y="1108.2" width="990" height="33.98" fill="#37252b"/>
<rect x="115.2" y="1142.18" width="990" height="33.98" fill="#393027"/>
<rect x="115.2" y="1176.17" width="990" height="13.59" fill="#28322c"/>
<rect x="115.2" y="1189.76" width="990" height="122.34" fill="#24313a"/>
<linearGradient id="gTF" x1="0" y1="1193" x2="0" y2="1312.1" gradientUnits="userSpaceOnUse"><stop offset="0" stop-color="#5a8590"/><stop offset="0.12" stop-color="#527880"/><stop offset="0.14" stop-color="#4c6e82"/><stop offset="0.42" stop-color="#3e586b"/><stop offset="0.44" stop-color="#445165"/><stop offset="0.7" stop-color="#3b4255"/><stop offset="0.72" stop-color="#38374a"/><stop offset="1" stop-color="#312b3d"/></linearGradient>
<path d="M115.2 1312.1 L115.2 1193.84 L117.2 1193.84 L119.2 1193.84 L121.2 1193.84 L123.2 1193.84 L125.2 1193.84 L127.2 1193.83 L129.2 1192.83 L131.2 1192.48 L133.2 1192.48 L135.2 1192.48 L137.2 1192.48 L139.2 1192.48 L141.2 1192.48 L143.2 1192.48 L145.2 1192.48 L147.2 1192.23 L149.2 1191.73 L151.2 1191.23 L153.2 1191.5 L155.2 1192 L157.2 1192.44 L159.2 1191.78 L161.2 1191.11 L163.2 1190.44 L165.2 1189.78 L167.2 1189.76 L169.2 1189.76 L171.2 1189.76 L173.2 1189.76 L175.2 1190.47 L177.2 1191.27 L179.2 1191.93 L181.2 1191.93 L183.2 1191.93 L185.2 1191.93 L187.2 1191.93 L189.2 1191.93 L191.2 1192.45 L193.2 1193.15 L195.2 1193.84 L197.2 1194.18 L199.2 1194.51 L201.2 1194.84 L203.2 1195.18 L205.2 1195.2 L207.2 1195.2 L209.2 1195.2 L211.2 1195.2 L213.2 1195.2 L215.2 1195.5 L217.2 1196.01 L219.2 1196.01 L221.2 1196.01 L223.2 1196.01 L225.2 1196.01 L227.2 1196.01 L229.2 1196.01 L231.2 1196.01 L233.2 1196.01 L235.2 1196.01 L237.2 1196.01 L239.2 1196.01 L241.2 1196.01 L243.2 1196.01 L245.2 1196.01 L247.2 1196.01 L249.2 1196.01 L251.2 1196.01 L253.2 1196.01 L255.2 1195.92 L257.2 1195.12 L259.2 1194.92 L261.2 1194.92 L263.2 1194.92 L265.2 1194.92 L267.2 1194.92 L269.2 1194.92 L271.2 1194.92 L273.2 1194.92 L275.2 1194.92 L277.2 1194.92 L279.2 1194.92 L281.2 1194.92 L283.2 1194.92 L285.2 1194.92 L287.2 1194.92 L289.2 1194.92 L291.2 1194.92 L293.2 1194.92 L295.2 1194.92 L297.2 1194.92 L299.2 1194.92 L301.2 1194.92 L303.2 1194.92 L305.2 1194.92 L307.2 1194.92 L309.2 1194.92 L311.2 1194.92 L313.2 1194.92 L315.2 1194.92 L317.2 1194.92 L319.2 1194.92 L321.2 1194.92 L323.2 1194.92 L325.2 1194.92 L327.2 1194.92 L329.2 1194.92 L331.2 1194.92 L333.2 1194.92 L335.2 1194.92 L337.2 1194.92 L339.2 1194.92 L341.2 1194.92 L343.2 1194.92 L345.2 1194.92 L347.2 1194.92 L349.2 1194.92 L351.2 1194.92 L353.2 1194.92 L355.2 1194.92 L357.2 1194.92 L359.2 1194.92 L361.2 1194.85 L363.2 1194.05 L365.2 1193.84 L367.2 1193.84 L369.2 1193.84 L371.2 1193.84 L373.2 1193.84 L375.2 1193.84 L377.2 1193.84 L379.2 1193.84 L381.2 1193.84 L383.2 1193.84 L385.2 1193.84 L387.2 1193.84 L389.2 1193.84 L391.2 1193.84 L393.2 1193.84 L395.2 1193.84 L397.2 1193.84 L399.2 1193.84 L401.2 1193.84 L403.2 1193.84 L405.2 1193.84 L407.2 1193.84 L409.2 1193.84 L411.2 1193.84 L413.2 1193.84 L415.2 1193.84 L417.2 1193.84 L419.2 1193.84 L421.2 1193.84 L423.2 1193.84 L425.2 1193.84 L427.2 1193.84 L429.2 1193.84 L431.2 1193.84 L433.2 1193.84 L435.2 1193.84 L437.2 1193.84 L439.2 1193.84 L441.2 1193.84 L443.2 1193.84 L445.2 1193.84 L447.2 1193.84 L449.2 1193.84 L451.2 1193.84 L453.2 1193.84 L455.2 1193.84 L457.2 1193.84 L459.2 1193.84 L461.2 1193.84 L463.2 1193.84 L465.2 1193.84 L467.2 1193.84 L469.2 1193.84 L471.2 1193.84 L473.2 1193.84 L475.2 1193.84 L477.2 1193.84 L479.2 1193.84 L481.2 1193.84 L483.2 1193.84 L485.2 1193.84 L487.2 1193.84 L489.2 1193.84 L491.2 1193.84 L493.2 1193.84 L495.2 1193.84 L497.2 1193.84 L499.2 1193.84 L501.2 1193.84 L503.2 1193.84 L505.2 1193.84 L507.2 1193.84 L509.2 1193.84 L511.2 1193.84 L513.2 1193.84 L515.2 1193.84 L517.2 1193.84 L519.2 1193.84 L521.2 1193.84 L523.2 1193.84 L525.2 1193.84 L527.2 1193.84 L529.2 1193.84 L531.2 1193.84 L533.2 1193.84 L535.2 1193.84 L537.2 1193.84 L539.2 1193.84 L541.2 1193.84 L543.2 1193.84 L545.2 1193.84 L547.2 1193.84 L549.2 1193.84 L551.2 1193.84 L553.2 1193.84 L555.2 1193.84 L557.2 1193.84 L559.2 1193.84 L561.2 1193.84 L563.2 1193.84 L565.2 1193.84 L567.2 1193.84 L569.2 1193.84 L571.2 1193.84 L573.2 1193.84 L575.2 1193.84 L577.2 1193.84 L579.2 1193.84 L581.2 1193.84 L583.2 1193.84 L585.2 1193.84 L587.2 1193.84 L589.2 1193.84 L591.2 1193.84 L593.2 1193.84 L595.2 1193.84 L597.2 1193.84 L599.2 1193.84 L601.2 1193.84 L603.2 1193.83 L605.2 1193.83 L607.2 1193.83 L609.2 1193.82 L611.2 1193.82 L613.2 1193.82 L615.2 1193.81 L617.2 1193.81 L619.2 1193.81 L621.2 1193.81 L623.2 1193.8 L625.2 1193.8 L627.2 1193.8 L629.2 1193.79 L631.2 1193.79 L633.2 1193.79 L635.2 1193.78 L637.2 1193.78 L639.2 1193.78 L641.2 1193.78 L643.2 1193.77 L645.2 1193.77 L647.2 1193.77 L649.2 1193.76 L651.2 1193.76 L653.2 1193.76 L655.2 1193.75 L657.2 1193.75 L659.2 1193.75 L661.2 1193.75 L663.2 1193.74 L665.2 1193.74 L667.2 1193.74 L669.2 1193.73 L671.2 1193.73 L673.2 1193.73 L675.2 1193.72 L677.2 1193.72 L679.2 1193.72 L681.2 1193.72 L683.2 1193.71 L685.2 1193.71 L687.2 1193.71 L689.2 1193.7 L691.2 1193.7 L693.2 1193.7 L695.2 1193.69 L697.2 1193.69 L699.2 1193.69 L701.2 1193.69 L703.2 1193.68 L705.2 1193.68 L707.2 1193.68 L709.2 1193.67 L711.2 1193.67 L713.2 1193.67 L715.2 1193.66 L717.2 1193.66 L719.2 1193.66 L721.2 1193.66 L723.2 1193.65 L725.2 1193.65 L727.2 1193.65 L729.2 1193.64 L731.2 1193.64 L733.2 1194.1 L735.2 1194.41 L737.2 1194.41 L739.2 1194.41 L741.2 1194.41 L743.2 1194.41 L745.2 1194.41 L747.2 1194.41 L749.2 1194.41 L751.2 1194.41 L753.2 1194.41 L755.2 1194.41 L757.2 1194.41 L759.2 1194.41 L761.2 1194.41 L763.2 1194.41 L765.2 1194.41 L767.2 1194.41 L769.2 1194.41 L771.2 1194.41 L773.2 1194.41 L775.2 1194.41 L777.2 1194.41 L779.2 1194.41 L781.2 1194.41 L783.2 1194.41 L785.2 1194.41 L787.2 1194.41 L789.2 1194.41 L791.2 1194.41 L793.2 1194.41 L795.2 1194.41 L797.2 1194.41 L799.2 1194.41 L801.2 1194.41 L803.2 1194.41 L805.2 1194.41 L807.2 1194.41 L809.2 1194.41 L811.2 1194.41 L813.2 1194.41 L815.2 1194.41 L817.2 1194.41 L819.2 1194.41 L821.2 1194.41 L823.2 1194.41 L825.2 1194.41 L827.2 1194.41 L829.2 1194.41 L831.2 1194.41 L833.2 1194.41 L835.2 1194.41 L837.2 1194.41 L839.2 1194.41 L841.2 1194.41 L843.2 1194.41 L845.2 1194.41 L847.2 1194.41 L849.2 1194.41 L851.2 1194.41 L853.2 1194.41 L855.2 1194.41 L857.2 1193.48 L859.2 1193.12 L861.2 1193.12 L863.2 1193.12 L865.2 1193.12 L867.2 1193.12 L869.2 1193.12 L871.2 1193.12 L873.2 1193.12 L875.2 1193.12 L877.2 1193.12 L879.2 1193.12 L881.2 1193.12 L883.2 1193.12 L885.2 1193.12 L887.2 1193.12 L889.2 1193.12 L891.2 1193.12 L893.2 1193.12 L895.2 1192.63 L897.2 1191.83 L899.2 1191.58 L901.2 1191.58 L903.2 1191.58 L905.2 1191.58 L907.2 1191.58 L909.2 1191.58 L911.2 1191.58 L913.2 1192.06 L915.2 1192.61 L917.2 1192.61 L919.2 1192.61 L921.2 1192.61 L923.2 1192.61 L925.2 1192.61 L927.2 1192.61 L929.2 1193.13 L931.2 1193.38 L933.2 1193.38 L935.2 1193.38 L937.2 1193.38 L939.2 1193.38 L941.2 1193.38 L943.2 1193.38 L945.2 1193.38 L947.2 1193.38 L949.2 1193.38 L951.2 1193.38 L953.2 1193.38 L955.2 1193.38 L957.2 1193.38 L959.2 1193.38 L961.2 1193.38 L963.2 1193.38 L965.2 1194.05 L967.2 1193.97 L969.2 1193.38 L971.2 1193.38 L973.2 1193.38 L975.2 1193.38 L977.2 1193.38 L979.2 1193.38 L981.2 1193.38 L983.2 1192.89 L985.2 1192.61 L987.2 1192.61 L989.2 1192.61 L991.2 1192.61 L993.2 1192.61 L995.2 1192.61 L997.2 1192.61 L999.2 1192.61 L1001.2 1192.61 L1003.2 1192.92 L1005.2 1193.38 L1007.2 1193.38 L1009.2 1193.38 L1011.2 1193.38 L1013.2 1193.38 L1015.2 1193.38 L1017.2 1193.38 L1019.2 1193.38 L1021.2 1193.38 L1023.2 1193.38 L1025.2 1193.38 L1027.2 1192.08 L1029.2 1191.58 L1031.2 1191.58 L1033.2 1191.58 L1035.2 1191.58 L1037.2 1192.2 L1039.2 1192.61 L1041.2 1192.61 L1043.2 1192.61 L1045.2 1192.61 L1047.2 1192.61 L1049.2 1192.61 L1051.2 1192.61 L1053.2 1192.61 L1055.2 1193.07 L1057.2 1193.38 L1059.2 1193.38 L1061.2 1193.38 L1063.2 1193.38 L1065.2 1193.38 L1067.2 1193.38 L1069.2 1193.38 L1071.2 1193.38 L1073.2 1193.38 L1075.2 1193.38 L1077.2 1193.38 L1079.2 1193.38 L1081.2 1193.14 L1083.2 1192.86 L1085.2 1192.58 L1087.2 1192.3 L1089.2 1192.02 L1091.2 1191.74 L1093.2 1191.69 L1095.2 1191.94 L1097.2 1192.19 L1099.2 1192.44 L1101.2 1192.69 L1103.2 1192.87 L1105.2 1192.87 L1105.2 1312.1 Z" fill="url(#gTF)"/>
<line x1="115.2" y1="1108.2" x2="1105.2" y2="1108.2" stroke="rgba(240,250,255,0.09)" stroke-width="1"/>
<text x="104.5" y="1116.2" font-size="25" fill="#ccccdb" text-anchor="end" textLength="62.81" lengthAdjust="spacingAndGlyphs" class="a">30 °C</text>
<line x1="115.2" y1="1142.18" x2="1105.2" y2="1142.18" stroke="rgba(240,250,255,0.09)" stroke-width="1"/>
<text x="104.5" y="1150.18" font-size="25" fill="#ccccdb" text-anchor="end" textLength="62.81" lengthAdjust="spacingAndGlyphs" class="a">25 °C</text>
<line x1="115.2" y1="1176.17" x2="1105.2" y2="1176.17" stroke="rgba(240,250,255,0.09)" stroke-width="1"/>
<text x="104.5" y="1184.17" font-size="25" fill="#ccccdb" text-anchor="end" textLength="62.81" lengthAdjust="spacingAndGlyphs" class="a">20 °C</text>
<line x1="115.2" y1="1210.15" x2="1105.2" y2="1210.15" stroke="rgba(240,250,255,0.09)" stroke-width="1"/>
<text x="104.5" y="1218.15" font-size="25" fill="#ccccdb" text-anchor="end" textLength="62.81" lengthAdjust="spacingAndGlyphs" class="a">15 °C</text>
<line x1="115.2" y1="1244.13" x2="1105.2" y2="1244.13" stroke="rgba(240,250,255,0.09)" stroke-width="1"/>
<text x="104.5" y="1252.13" font-size="25" fill="#ccccdb" text-anchor="end" textLength="62.81" lengthAdjust="spacingAndGlyphs" class="a">10 °C</text>
<line x1="115.2" y1="1278.12" x2="1105.2" y2="1278.12" stroke="rgba(240,250,255,0.09)" stroke-width="1"/>
<text x="104.5" y="1286.12" font-size="25" fill="#ccccdb" text-anchor="end" textLength="48.91" lengthAdjust="spacingAndGlyphs" class="a">5 °C</text>
<line x1="115.2" y1="1312.1" x2="1105.2" y2="1312.1" stroke="rgba(240,250,255,0.09)" stroke-width="1"/>
<text x="104.5" y="1320.1" font-size="25" fill="#ccccdb" text-anchor="end" textLength="48.91" lengthAdjust="spacingAndGlyphs" class="a">0 °C</text>
<line x1="154.4" y1="1108.2" x2="154.4" y2="1319.6" stroke="rgba(240,250,255,0.09)" stroke-width="1"/>
<text x="153.4" y="1353.4" font-size="25" fill="#ccccdb" text-anchor="middle" class="a">18:00</text>
<line x1="278.1" y1="1108.2" x2="278.1" y2="1319.6" stroke="rgba(240,250,255,0.09)" stroke-width="1"/>
<text x="277.1" y="1353.4" font-size="25" fill="#ccccdb" text-anchor="middle" class="a">21:00</text>
<line x1="401.8" y1="1108.2" x2="401.8" y2="1319.6" stroke="rgba(240,250,255,0.09)" stroke-width="1"/>
<text x="400.8" y="1353.4" font-size="25" fill="#ccccdb" text-anchor="middle" class="a">00:00</text>
<line x1="525.5" y1="1108.2" x2="525.5" y2="1319.6" stroke="rgba(240,250,255,0.09)" stroke-width="1"/>
<text x="524.5" y="1353.4" font-size="25" fill="#ccccdb" text-anchor="middle" class="a">03:00</text>
<line x1="649.2" y1="1108.2" x2="649.2" y2="1319.6" stroke="rgba(240,250,255,0.09)" stroke-width="1"/>
<text x="648.2" y="1353.4" font-size="25" fill="#ccccdb" text-anchor="middle" class="a">06:00</text>
<line x1="772.9" y1="1108.2" x2="772.9" y2="1319.6" stroke="rgba(240,250,255,0.09)" stroke-width="1"/>
<text x="771.9" y="1353.4" font-size="25" fill="#ccccdb" text-anchor="middle" class="a">09:00</text>
<line x1="896.6" y1="1108.2" x2="896.6" y2="1319.6" stroke="rgba(240,250,255,0.09)" stroke-width="1"/>
<text x="895.6" y="1353.4" font-size="25" fill="#ccccdb" text-anchor="middle" class="a">12:00</text>
<line x1="1020.3" y1="1108.2" x2="1020.3" y2="1319.6" stroke="rgba(240,250,255,0.09)" stroke-width="1"/>
<text x="1019.3" y="1353.4" font-size="25" fill="#ccccdb" text-anchor="middle" class="a">15:00</text>
<path d="M115.2 1193.84 L117.2 1193.84 L119.2 1193.84 L121.2 1193.84 L123.2 1193.84 L125.2 1193.84 L127.2 1193.83 L129.2 1192.83 L131.2 1192.48 L133.2 1192.48 L135.2 1192.48 L137.2 1192.48 L139.2 1192.48 L141.2 1192.48 L143.2 1192.48 L145.2 1192.48 L147.2 1192.23 L149.2 1191.73 L151.2 1191.23 L153.2 1191.5 L155.2 1192 L157.2 1192.44 L159.2 1191.78 L161.2 1191.11 L163.2 1190.44 L165.2 1189.78 L167.2 1189.76 L169.2 1189.76 L171.2 1189.76 L173.2 1189.76 L175.2 1190.47 L177.2 1191.27 L179.2 1191.93 L181.2 1191.93 L183.2 1191.93 L185.2 1191.93 L187.2 1191.93 L189.2 1191.93 L191.2 1192.45 L193.2 1193.15 L195.2 1193.84 L197.2 1194.18 L199.2 1194.51 L201.2 1194.84 L203.2 1195.18 L205.2 1195.2 L207.2 1195.2 L209.2 1195.2 L211.2 1195.2 L213.2 1195.2 L215.2 1195.5 L217.2 1196.01 L219.2 1196.01 L221.2 1196.01 L223.2 1196.01 L225.2 1196.01 L227.2 1196.01 L229.2 1196.01 L231.2 1196.01 L233.2 1196.01 L235.2 1196.01 L237.2 1196.01 L239.2 1196.01 L241.2 1196.01 L243.2 1196.01 L245.2 1196.01 L247.2 1196.01 L249.2 1196.01 L251.2 1196.01 L253.2 1196.01 L255.2 1195.92 L257.2 1195.12 L259.2 1194.92 L261.2 1194.92 L263.2 1194.92 L265.2 1194.92 L267.2 1194.92 L269.2 1194.92 L271.2 1194.92 L273.2 1194.92 L275.2 1194.92 L277.2 1194.92 L279.2 1194.92 L281.2 1194.92 L283.2 1194.92 L285.2 1194.92 L287.2 1194.92 L289.2 1194.92 L291.2 1194.92 L293.2 1194.92 L295.2 1194.92 L297.2 1194.92 L299.2 1194.92 L301.2 1194.92 L303.2 1194.92 L305.2 1194.92 L307.2 1194.92 L309.2 1194.92 L311.2 1194.92 L313.2 1194.92 L315.2 1194.92 L317.2 1194.92 L319.2 1194.92 L321.2 1194.92 L323.2 1194.92 L325.2 1194.92 L327.2 1194.92 L329.2 1194.92 L331.2 1194.92 L333.2 1194.92 L335.2 1194.92 L337.2 1194.92 L339.2 1194.92 L341.2 1194.92 L343.2 1194.92 L345.2 1194.92 L347.2 1194.92 L349.2 1194.92 L351.2 1194.92 L353.2 1194.92 L355.2 1194.92 L357.2 1194.92 L359.2 1194.92 L361.2 1194.85 L363.2 1194.05 L365.2 1193.84 L367.2 1193.84 L369.2 1193.84 L371.2 1193.84 L373.2 1193.84 L375.2 1193.84 L377.2 1193.84 L379.2 1193.84 L381.2 1193.84 L383.2 1193.84 L385.2 1193.84 L387.2 1193.84 L389.2 1193.84 L391.2 1193.84 L393.2 1193.84 L395.2 1193.84 L397.2 1193.84 L399.2 1193.84 L401.2 1193.84 L403.2 1193.84 L405.2 1193.84 L407.2 1193.84 L409.2 1193.84 L411.2 1193.84 L413.2 1193.84 L415.2 1193.84 L417.2 1193.84 L419.2 1193.84 L421.2 1193.84 L423.2 1193.84 L425.2 1193.84 L427.2 1193.84 L429.2 1193.84 L431.2 1193.84 L433.2 1193.84 L435.2 1193.84 L437.2 1193.84 L439.2 1193.84 L441.2 1193.84 L443.2 1193.84 L445.2 1193.84 L447.2 1193.84 L449.2 1193.84 L451.2 1193.84 L453.2 1193.84 L455.2 1193.84 L457.2 1193.84 L459.2 1193.84 L461.2 1193.84 L463.2 1193.84 L465.2 1193.84 L467.2 1193.84 L469.2 1193.84 L471.2 1193.84 L473.2 1193.84 L475.2 1193.84 L477.2 1193.84 L479.2 1193.84 L481.2 1193.84 L483.2 1193.84 L485.2 1193.84 L487.2 1193.84 L489.2 1193.84 L491.2 1193.84 L493.2 1193.84 L495.2 1193.84 L497.2 1193.84 L499.2 1193.84 L501.2 1193.84 L503.2 1193.84 L505.2 1193.84 L507.2 1193.84 L509.2 1193.84 L511.2 1193.84 L513.2 1193.84 L515.2 1193.84 L517.2 1193.84 L519.2 1193.84 L521.2 1193.84 L523.2 1193.84 L525.2 1193.84 L527.2 1193.84 L529.2 1193.84 L531.2 1193.84 L533.2 1193.84 L535.2 1193.84 L537.2 1193.84 L539.2 1193.84 L541.2 1193.84 L543.2 1193.84 L545.2 1193.84 L547.2 1193.84 L549.2 1193.84 L551.2 1193.84 L553.2 1193.84 L555.2 1193.84 L557.2 1193.84 L559.2 1193.84 L561.2 1193.84 L563.2 1193.84 L565.2 1193.84 L567.2 1193.84 L569.2 1193.84 L571.2 1193.84 L573.2 1193.84 L575.2 1193.84 L577.2 1193.84 L579.2 1193.84 L581.2 1193.84 L583.2 1193.84 L585.2 1193.84 L587.2 1193.84 L589.2 1193.84 L591.2 1193.84 L593.2 1193.84 L595.2 1193.84 L597.2 1193.84 L599.2 1193.84 L601.2 1193.84 L603.2 1193.83 L605.2 1193.83 L607.2 1193.83 L609.2 1193.82 L611.2 1193.82 L613.2 1193.82 L615.2 1193.81 L617.2 1193.81 L619.2 1193.81 L621.2 1193.81 L623.2 1193.8 L625.2 1193.8 L627.2 1193.8 L629.2 1193.79 L631.2 1193.79 L633.2 1193.79 L635.2 1193.78 L637.2 1193.78 L639.2 1193.78 L641.2 1193.78 L643.2 1193.77 L645.2 1193.77 L647.2 1193.77 L649.2 1193.76 L651.2 1193.76 L653.2 1193.76 L655.2 1193.75 L657.2 1193.75 L659.2 1193.75 L661.2 1193.75 L663.2 1193.74 L665.2 1193.74 L667.2 1193.74 L669.2 1193.73 L671.2 1193.73 L673.2 1193.73 L675.2 1193.72 L677.2 1193.72 L679.2 1193.72 L681.2 1193.72 L683.2 1193.71 L685.2 1193.71 L687.2 1193.71 L689.2 1193.7 L691.2 1193.7 L693.2 1193.7 L695.2 1193.69 L697.2 1193.69 L699.2 1193.69 L701.2 1193.69 L703.2 1193.68 L705.2 1193.68 L707.2 1193.68 L709.2 1193.67 L711.2 1193.67 L713.2 1193.67 L715.2 1193.66 L717.2 1193.66 L719.2 1193.66 L721.2 1193.66 L723.2 1193.65 L725.2 1193.65 L727.2 1193.65 L729.2 1193.64 L731.2 1193.64 L733.2 1194.1 L735.2 1194.41 L737.2 1194.41 L739.2 1194.41 L741.2 1194.41 L743.2 1194.41 L745.2 1194.41 L747.2 1194.41 L749.2 1194.41 L751.2 1194.41 L753.2 1194.41 L755.2 1194.41 L757.2 1194.41 L759.2 1194.41 L761.2 1194.41 L763.2 1194.41 L765.2 1194.41 L767.2 1194.41 L769.2 1194.41 L771.2 1194.41 L773.2 1194.41 L775.2 1194.41 L777.2 1194.41 L779.2 1194.41 L781.2 1194.41 L783.2 1194.41 L785.2 1194.41 L787.2 1194.41 L789.2 1194.41 L791.2 1194.41 L793.2 1194.41 L795.2 1194.41 L797.2 1194.41 L799.2 1194.41 L801.2 1194.41 L803.2 1194.41 L805.2 1194.41 L807.2 1194.41 L809.2 1194.41 L811.2 1194.41 L813.2 1194.41 L815.2 1194.41 L817.2 1194.41 L819.2 1194.41 L821.2 1194.41 L823.2 1194.41 L825.2 1194.41 L827.2 1194.41 L829.2 1194.41 L831.2 1194.41 L833.2 1194.41 L835.2 1194.41 L837.2 1194.41 L839.2 1194.41 L841.2 1194.41 L843.2 1194.41 L845.2 1194.41 L847.2 1194.41 L849.2 1194.41 L851.2 1194.41 L853.2 1194.41 L855.2 1194.41 L857.2 1193.48 L859.2 1193.12 L861.2 1193.12 L863.2 1193.12 L865.2 1193.12 L867.2 1193.12 L869.2 1193.12 L871.2 1193.12 L873.2 1193.12 L875.2 1193.12 L877.2 1193.12 L879.2 1193.12 L881.2 1193.12 L883.2 1193.12 L885.2 1193.12 L887.2 1193.12 L889.2 1193.12 L891.2 1193.12 L893.2 1193.12 L895.2 1192.63 L897.2 1191.83 L899.2 1191.58 L901.2 1191.58 L903.2 1191.58 L905.2 1191.58 L907.2 1191.58 L909.2 1191.58 L911.2 1191.58 L913.2 1192.06 L915.2 1192.61 L917.2 1192.61 L919.2 1192.61 L921.2 1192.61 L923.2 1192.61 L925.2 1192.61 L927.2 1192.61 L929.2 1193.13 L931.2 1193.38 L933.2 1193.38 L935.2 1193.38 L937.2 1193.38 L939.2 1193.38 L941.2 1193.38 L943.2 1193.38 L945.2 1193.38 L947.2 1193.38 L949.2 1193.38 L951.2 1193.38 L953.2 1193.38 L955.2 1193.38 L957.2 1193.38 L959.2 1193.38 L961.2 1193.38 L963.2 1193.38 L965.2 1194.05 L967.2 1193.97 L969.2 1193.38 L971.2 1193.38 L973.2 1193.38 L975.2 1193.38 L977.2 1193.38 L979.2 1193.38 L981.2 1193.38 L983.2 1192.89 L985.2 1192.61 L987.2 1192.61 L989.2 1192.61 L991.2 1192.61 L993.2 1192.61 L995.2 1192.61 L997.2 1192.61 L999.2 1192.61 L1001.2 1192.61 L1003.2 1192.92 L1005.2 1193.38 L1007.2 1193.38 L1009.2 1193.38 L1011.2 1193.38 L1013.2 1193.38 L1015.2 1193.38 L1017.2 1193.38 L1019.2 1193.38 L1021.2 1193.38 L1023.2 1193.38 L1025.2 1193.38 L1027.2 1192.08 L1029.2 1191.58 L1031.2 1191.58 L1033.2 1191.58 L1035.2 1191.58 L1037.2 1192.2 L1039.2 1192.61 L1041.2 1192.61 L1043.2 1192.61 L1045.2 1192.61 L1047.2 1192.61 L1049.2 1192.61 L1051.2 1192.61 L1053.2 1192.61 L1055.2 1193.07 L1057.2 1193.38 L1059.2 1193.38 L1061.2 1193.38 L1063.2 1193.38 L1065.2 1193.38 L1067.2 1193.38 L1069.2 1193.38 L1071.2 1193.38 L1073.2 1193.38 L1075.2 1193.38 L1077.2 1193.38 L1079.2 1193.38 L1081.2 1193.14 L1083.2 1192.86 L1085.2 1192.58 L1087.2 1192.3 L1089.2 1192.02 L1091.2 1191.74 L1093.2 1191.69 L1095.2 1191.94 L1097.2 1192.19 L1099.2 1192.44 L1101.2 1192.69 L1103.2 1192.87 L1105.2 1192.87" fill="none" stroke="#86cede" stroke-width="2.5" stroke-linejoin="round"/>
<rect x="38.8" y="1385.6" width="28" height="8" rx="4" fill="#86cede"/>
<text x="82.8" y="1397.9" font-size="25" fill="#ccccdb" textLength="65.82" lengthAdjust="spacingAndGlyphs" class="a">Fresh</text>
<rect x="1156" y="995" width="190" height="438" rx="10" fill="#191b1f" stroke="#2e3036" stroke-width="2"/>
<text x="1180.5" y="1046.3" font-size="29.5" fill="#ccccdb" textLength="75.5" lengthAdjust="spacingAndGlyphs" class="t">noxM</text>
<path d="M1209.9 1192.5L1250.4 1162.8H1283.1V1346.3H1254.7V1189.1L1209.9 1220.3Z" fill="#808080"/>
<rect x="1364" y="995" width="1124" height="438" rx="10" fill="#191b1f" stroke="#2e3036" stroke-width="2"/>
<text x="1388.5" y="1046.3" font-size="29.5" fill="#ccccdb" textLength="120.1" lengthAdjust="spacingAndGlyphs" class="t">Humidity</text>
<rect x="1489.2" y="1108.2" width="966" height="61.17" fill="#1e2938"/>
<rect x="1489.2" y="1169.37" width="966" height="20.39" fill="#233031"/>
<rect x="1489.2" y="1189.76" width="966" height="122.34" fill="#30332d"/>
<linearGradient id="gHF" x1="0" y1="1195" x2="0" y2="1312.1" gradientUnits="userSpaceOnUse"><stop offset="0" stop-color="#7d8f57"/><stop offset="0.3" stop-color="#6c814e"/><stop offset="0.32" stop-color="#627a4b"/><stop offset="0.5" stop-color="#566847"/><stop offset="0.55" stop-color="#5f6146"/><stop offset="0.78" stop-color="#4b4a3c"/><stop offset="0.8" stop-color="#464537"/><stop offset="1" stop-color="#37362f"/></linearGradient>
<path d="M1489.2 1312.1 L1489.2 1207.43 L1491.2 1207.43 L1493.2 1207.43 L1495.2 1207.43 L1497.2 1207.43 L1499.2 1207.3 L1501.2 1206.3 L1503.2 1205.3 L1505.2 1203.48 L1507.2 1200.7 L1509.2 1202.03 L1511.2 1203.36 L1513.2 1204.03 L1515.2 1204.69 L1517.2 1204.42 L1519.2 1204.12 L1521.2 1203.8 L1523.2 1203.4 L1525.2 1203 L1527.2 1202.95 L1529.2 1203.22 L1531.2 1200.88 L1533.2 1196.01 L1535.2 1192.01 L1537.2 1191 L1539.2 1190.84 L1541.2 1190.69 L1543.2 1190.54 L1545.2 1190.38 L1547.2 1190.23 L1549.2 1190.08 L1551.2 1189.92 L1553.2 1189.77 L1555.2 1189.63 L1557.2 1189.5 L1559.2 1189.37 L1561.2 1189.23 L1563.2 1190.19 L1565.2 1191.32 L1567.2 1192.46 L1569.2 1193.59 L1571.2 1194.03 L1573.2 1194.28 L1575.2 1194.53 L1577.2 1194.78 L1579.2 1195.03 L1581.2 1195.27 L1583.2 1195.47 L1585.2 1195.67 L1587.2 1195.87 L1589.2 1196.07 L1591.2 1196.27 L1593.2 1196.47 L1595.2 1196.59 L1597.2 1196.66 L1599.2 1196.73 L1601.2 1196.79 L1603.2 1196.86 L1605.2 1196.93 L1607.2 1196.99 L1609.2 1197.06 L1611.2 1197.13 L1613.2 1197.19 L1615.2 1197.26 L1617.2 1197.33 L1619.2 1197.39 L1621.2 1197.46 L1623.2 1197.53 L1625.2 1197.59 L1627.2 1197.66 L1629.2 1197.73 L1631.2 1197.79 L1633.2 1197.86 L1635.2 1197.93 L1637.2 1198.03 L1639.2 1198.13 L1641.2 1198.23 L1643.2 1198.33 L1645.2 1198.43 L1647.2 1198.53 L1649.2 1198.63 L1651.2 1198.73 L1653.2 1198.83 L1655.2 1198.93 L1657.2 1199.03 L1659.2 1199.13 L1661.2 1199.23 L1663.2 1199.32 L1665.2 1199.39 L1667.2 1199.47 L1669.2 1199.55 L1671.2 1199.63 L1673.2 1199.7 L1675.2 1199.78 L1677.2 1199.86 L1679.2 1199.93 L1681.2 1200.01 L1683.2 1200.09 L1685.2 1200.16 L1687.2 1200.24 L1689.2 1200.32 L1691.2 1200.39 L1693.2 1200.47 L1695.2 1200.55 L1697.2 1200.63 L1699.2 1200.68 L1701.2 1200.73 L1703.2 1200.79 L1705.2 1200.84 L1707.2 1200.89 L1709.2 1200.94 L1711.2 1201 L1713.2 1201.05 L1715.2 1201.1 L1717.2 1201.15 L1719.2 1201.21 L1721.2 1201.26 L1723.2 1201.31 L1725.2 1201.37 L1727.2 1201.42 L1729.2 1201.47 L1731.2 1201.52 L1733.2 1201.58 L1735.2 1201.63 L1737.2 1201.68 L1739.2 1201.73 L1741.2 1201.79 L1743.2 1201.84 L1745.2 1201.89 L1747.2 1201.94 L1749.2 1201.99 L1751.2 1201.99 L1753.2 1201.99 L1755.2 1201.99 L1757.2 1201.99 L1759.2 1201.99 L1761.2 1201.99 L1763.2 1201.99 L1765.2 1201.99 L1767.2 1201.99 L1769.2 1201.99 L1771.2 1201.99 L1773.2 1201.99 L1775.2 1201.99 L1777.2 1201.99 L1779.2 1201.99 L1781.2 1201.99 L1783.2 1201.99 L1785.2 1201.99 L1787.2 1201.99 L1789.2 1201.99 L1791.2 1201.99 L1793.2 1201.99 L1795.2 1201.99 L1797.2 1201.99 L1799.2 1201.99 L1801.2 1201.99 L1803.2 1201.99 L1805.2 1201.99 L1807.2 1201.99 L1809.2 1201.99 L1811.2 1201.99 L1813.2 1201.99 L1815.2 1201.99 L1817.2 1201.99 L1819.2 1201.99 L1821.2 1201.99 L1823.2 1201.99 L1825.2 1201.99 L1827.2 1201.99 L1829.2 1201.99 L1831.2 1201.99 L1833.2 1201.99 L1835.2 1201.99 L1837.2 1201.99 L1839.2 1201.99 L1841.2 1201.99 L1843.2 1201.99 L1845.2 1201.99 L1847.2 1201.99 L1849.2 1201.99 L1851.2 1201.99 L1853.2 1201.99 L1855.2 1201.99 L1857.2 1201.99 L1859.2 1201.99 L1861.2 1201.99 L1863.2 1201.99 L1865.2 1201.99 L1867.2 1201.99 L1869.2 1201.99 L1871.2 1201.99 L1873.2 1201.99 L1875.2 1201.99 L1877.2 1201.99 L1879.2 1201.99 L1881.2 1201.99 L1883.2 1201.99 L1885.2 1201.99 L1887.2 1201.99 L1889.2 1201.99 L1891.2 1201.99 L1893.2 1201.99 L1895.2 1201.99 L1897.2 1201.99 L1899.2 1201.99 L1901.2 1201.99 L1903.2 1201.99 L1905.2 1201.99 L1907.2 1201.99 L1909.2 1201.99 L1911.2 1201.99 L1913.2 1201.99 L1915.2 1201.99 L1917.2 1201.99 L1919.2 1201.99 L1921.2 1202.03 L1923.2 1202.12 L1925.2 1202.22 L1927.2 1202.31 L1929.2 1202.4 L1931.2 1202.49 L1933.2 1202.58 L1935.2 1202.67 L1937.2 1202.77 L1939.2 1202.86 L1941.2 1202.95 L1943.2 1203.04 L1945.2 1203.13 L1947.2 1203.22 L1949.2 1203.32 L1951.2 1203.34 L1953.2 1203.31 L1955.2 1203.29 L1957.2 1203.26 L1959.2 1203.23 L1961.2 1203.21 L1963.2 1203.18 L1965.2 1203.16 L1967.2 1203.13 L1969.2 1203.11 L1971.2 1203.08 L1973.2 1203.06 L1975.2 1203.03 L1977.2 1203 L1979.2 1202.98 L1981.2 1202.95 L1983.2 1202.93 L1985.2 1202.9 L1987.2 1202.88 L1989.2 1202.85 L1991.2 1202.82 L1993.2 1202.8 L1995.2 1202.77 L1997.2 1202.75 L1999.2 1202.72 L2001.2 1202.7 L2003.2 1202.67 L2005.2 1203.06 L2007.2 1203.94 L2009.2 1203.94 L2011.2 1203.94 L2013.2 1203.94 L2015.2 1203.94 L2017.2 1203.94 L2019.2 1203.94 L2021.2 1203.94 L2023.2 1203.94 L2025.2 1203.94 L2027.2 1203.94 L2029.2 1203.94 L2031.2 1203.94 L2033.2 1203.94 L2035.2 1203.94 L2037.2 1203.94 L2039.2 1203.94 L2041.2 1203.94 L2043.2 1203.94 L2045.2 1203.94 L2047.2 1203.94 L2049.2 1203.94 L2051.2 1204.16 L2053.2 1205.16 L2055.2 1205.23 L2057.2 1205.23 L2059.2 1205.23 L2061.2 1205.23 L2063.2 1205.23 L2065.2 1205.23 L2067.2 1205.23 L2069.2 1205.23 L2071.2 1205.23 L2073.2 1205.23 L2075.2 1205.23 L2077.2 1205.23 L2079.2 1205.23 L2081.2 1205.23 L2083.2 1205.23 L2085.2 1205.23 L2087.2 1205.23 L2089.2 1205.23 L2091.2 1205.23 L2093.2 1205.23 L2095.2 1205.23 L2097.2 1205.23 L2099.2 1205.23 L2101.2 1205.23 L2103.2 1205.23 L2105.2 1205.23 L2107.2 1205.23 L2109.2 1205.23 L2111.2 1205.23 L2113.2 1205.23 L2115.2 1205.23 L2117.2 1205.23 L2119.2 1205.23 L2121.2 1205.23 L2123.2 1205.23 L2125.2 1205.23 L2127.2 1205.23 L2129.2 1205.23 L2131.2 1205.23 L2133.2 1205.23 L2135.2 1205.23 L2137.2 1205.23 L2139.2 1205.23 L2141.2 1205.23 L2143.2 1205.23 L2145.2 1205.23 L2147.2 1205.23 L2149.2 1205.23 L2151.2 1205.23 L2153.2 1205.23 L2155.2 1205.23 L2157.2 1205.23 L2159.2 1205.28 L2161.2 1205.68 L2163.2 1205.75 L2165.2 1205.75 L2167.2 1205.75 L2169.2 1205.75 L2171.2 1205.75 L2173.2 1205.75 L2175.2 1205.75 L2177.2 1205.75 L2179.2 1205.75 L2181.2 1205.75 L2183.2 1206.17 L2185.2 1206.78 L2187.2 1206.78 L2189.2 1206.78 L2191.2 1206.78 L2193.2 1206.78 L2195.2 1206.78 L2197.2 1206.78 L2199.2 1206.78 L2201.2 1206.78 L2203.2 1206.78 L2205.2 1206.78 L2207.2 1206.78 L2209.2 1206.78 L2211.2 1206.78 L2213.2 1206.78 L2215.2 1206.78 L2217.2 1206.78 L2219.2 1206.78 L2221.2 1206.78 L2223.2 1206.78 L2225.2 1206.78 L2227.2 1206.78 L2229.2 1206.78 L2231.2 1206.78 L2233.2 1206.78 L2235.2 1206.78 L2237.2 1206.78 L2239.2 1206.78 L2241.2 1206.78 L2243.2 1206.78 L2245.2 1206.78 L2247.2 1206.78 L2249.2 1206.73 L2251.2 1205.67 L2253.2 1204.6 L2255.2 1203.53 L2257.2 1202.71 L2259.2 1203.05 L2261.2 1203.38 L2263.2 1203.71 L2265.2 1204.09 L2267.2 1204.56 L2269.2 1205.02 L2271.2 1205.49 L2273.2 1205.75 L2275.2 1205.75 L2277.2 1205.75 L2279.2 1205.75 L2281.2 1205.75 L2283.2 1205.75 L2285.2 1205.75 L2287.2 1206.55 L2289.2 1206.78 L2291.2 1206.78 L2293.2 1206.78 L2295.2 1206.78 L2297.2 1206.78 L2299.2 1206.78 L2301.2 1206.78 L2303.2 1206.78 L2305.2 1206.78 L2307.2 1206.78 L2309.2 1206.78 L2311.2 1206.78 L2313.2 1206.78 L2315.2 1206.78 L2317.2 1206.78 L2319.2 1206.78 L2321.2 1206.78 L2323.2 1205.6 L2325.2 1205.23 L2327.2 1205.23 L2329.2 1205.23 L2331.2 1205.23 L2333.2 1205.23 L2335.2 1205.23 L2337.2 1205.23 L2339.2 1205.23 L2341.2 1205.23 L2343.2 1205.23 L2345.2 1205.23 L2347.2 1205.23 L2349.2 1205.23 L2351.2 1205.23 L2353.2 1205.86 L2355.2 1206.78 L2357.2 1206.78 L2359.2 1206.78 L2361.2 1206.78 L2363.2 1206.78 L2365.2 1206.78 L2367.2 1206.78 L2369.2 1206.78 L2371.2 1206.78 L2373.2 1206.78 L2375.2 1206.78 L2377.2 1204.36 L2379.2 1201.76 L2381.2 1200.31 L2383.2 1200.98 L2385.2 1201.65 L2387.2 1202.31 L2389.2 1202.66 L2391.2 1202.66 L2393.2 1202.66 L2395.2 1202.66 L2397.2 1202.66 L2399.2 1202.66 L2401.2 1202.66 L2403.2 1202.66 L2405.2 1203.42 L2407.2 1204.42 L2409.2 1205.23 L2411.2 1205.23 L2413.2 1205.23 L2415.2 1205.23 L2417.2 1205.23 L2419.2 1205.23 L2421.2 1205.23 L2423.2 1205.23 L2425.2 1205.23 L2427.2 1205.23 L2429.2 1205.23 L2431.2 1205.23 L2433.2 1201.44 L2435.2 1195.04 L2437.2 1192.51 L2439.2 1191.98 L2441.2 1193.08 L2443.2 1194.78 L2445.2 1196.27 L2447.2 1196.6 L2449.2 1196.93 L2451.2 1197.27 L2453.2 1197.5 L2455.2 1197.5 L2455.2 1312.1 Z" fill="url(#gHF)"/>
<linearGradient id="gHC" x1="0" y1="1187" x2="0" y2="1312.1" gradientUnits="userSpaceOnUse"><stop offset="0" stop-color="#c2bd91"/><stop offset="0.5" stop-color="#8f8b6a"/><stop offset="1" stop-color="#4a4639"/></linearGradient>
<rect x="1537" y="1188" width="20" height="124.1" fill="url(#gHC)"/>
<line x1="1489.2" y1="1108.2" x2="2455.2" y2="1108.2" stroke="rgba(240,250,255,0.09)" stroke-width="1"/>
<text x="1478.7" y="1116.2" font-size="25" fill="#ccccdb" text-anchor="end" textLength="92.51" lengthAdjust="spacingAndGlyphs" class="a">100 %H</text>
<line x1="1489.2" y1="1148.98" x2="2455.2" y2="1148.98" stroke="rgba(240,250,255,0.09)" stroke-width="1"/>
<text x="1478.7" y="1156.98" font-size="25" fill="#ccccdb" text-anchor="end" textLength="78.05" lengthAdjust="spacingAndGlyphs" class="a">80 %H</text>
<line x1="1489.2" y1="1189.76" x2="2455.2" y2="1189.76" stroke="rgba(240,250,255,0.09)" stroke-width="1"/>
<text x="1478.7" y="1197.76" font-size="25" fill="#ccccdb" text-anchor="end" textLength="78.05" lengthAdjust="spacingAndGlyphs" class="a">60 %H</text>
<line x1="1489.2" y1="1230.54" x2="2455.2" y2="1230.54" stroke="rgba(240,250,255,0.09)" stroke-width="1"/>
<text x="1478.7" y="1238.54" font-size="25" fill="#ccccdb" text-anchor="end" textLength="78.05" lengthAdjust="spacingAndGlyphs" class="a">40 %H</text>
<line x1="1489.2" y1="1271.32" x2="2455.2" y2="1271.32" stroke="rgba(240,250,255,0.09)" stroke-width="1"/>
<text x="1478.7" y="1279.32" font-size="25" fill="#ccccdb" text-anchor="end" textLength="78.05" lengthAdjust="spacingAndGlyphs" class="a">20 %H</text>
<line x1="1489.2" y1="1312.1" x2="2455.2" y2="1312.1" stroke="rgba(240,250,255,0.09)" stroke-width="1"/>
<text x="1478.7" y="1320.1" font-size="25" fill="#ccccdb" text-anchor="end" textLength="63.59" lengthAdjust="spacingAndGlyphs" class="a">0 %H</text>
<line x1="1528" y1="1108.2" x2="1528" y2="1319.6" stroke="rgba(240,250,255,0.09)" stroke-width="1"/>
<text x="1527" y="1353.4" font-size="25" fill="#ccccdb" text-anchor="middle" class="a">18:00</text>
<line x1="1648.7" y1="1108.2" x2="1648.7" y2="1319.6" stroke="rgba(240,250,255,0.09)" stroke-width="1"/>
<text x="1647.7" y="1353.4" font-size="25" fill="#ccccdb" text-anchor="middle" class="a">21:00</text>
<line x1="1769.4" y1="1108.2" x2="1769.4" y2="1319.6" stroke="rgba(240,250,255,0.09)" stroke-width="1"/>
<text x="1768.4" y="1353.4" font-size="25" fill="#ccccdb" text-anchor="middle" class="a">00:00</text>
<line x1="1890.1" y1="1108.2" x2="1890.1" y2="1319.6" stroke="rgba(240,250,255,0.09)" stroke-width="1"/>
<text x="1889.1" y="1353.4" font-size="25" fill="#ccccdb" text-anchor="middle" class="a">03:00</text>
<line x1="2010.8" y1="1108.2" x2="2010.8" y2="1319.6" stroke="rgba(240,250,255,0.09)" stroke-width="1"/>
<text x="2009.8" y="1353.4" font-size="25" fill="#ccccdb" text-anchor="middle" class="a">06:00</text>
<line x1="2131.5" y1="1108.2" x2="2131.5" y2="1319.6" stroke="rgba(240,250,255,0.09)" stroke-width="1"/>
<text x="2130.5" y="1353.4" font-size="25" fill="#ccccdb" text-anchor="middle" class="a">09:00</text>
<line x1="2252.2" y1="1108.2" x2="2252.2" y2="1319.6" stroke="rgba(240,250,255,0.09)" stroke-width="1"/>
<text x="2251.2" y="1353.4" font-size="25" fill="#ccccdb" text-anchor="middle" class="a">12:00</text>
<line x1="2372.9" y1="1108.2" x2="2372.9" y2="1319.6" stroke="rgba(240,250,255,0.09)" stroke-width="1"/>
<text x="2371.9" y="1353.4" font-size="25" fill="#ccccdb" text-anchor="middle" class="a">15:00</text>
<path d="M1489.2 1207.43 L1491.2 1207.43 L1493.2 1207.43 L1495.2 1207.43 L1497.2 1207.43 L1499.2 1207.3 L1501.2 1206.3 L1503.2 1205.3 L1505.2 1203.48 L1507.2 1200.7 L1509.2 1202.03 L1511.2 1203.36 L1513.2 1204.03 L1515.2 1204.69 L1517.2 1204.42 L1519.2 1204.12 L1521.2 1203.8 L1523.2 1203.4 L1525.2 1203 L1527.2 1202.95 L1529.2 1203.22 L1531.2 1200.88 L1533.2 1196.01 L1535.2 1192.01 L1537.2 1191 L1539.2 1190.84 L1541.2 1190.69 L1543.2 1190.54 L1545.2 1190.38 L1547.2 1190.23 L1549.2 1190.08 L1551.2 1189.92 L1553.2 1189.77 L1555.2 1189.63 L1557.2 1189.5 L1559.2 1189.37 L1561.2 1189.23 L1563.2 1190.19 L1565.2 1191.32 L1567.2 1192.46 L1569.2 1193.59 L1571.2 1194.03 L1573.2 1194.28 L1575.2 1194.53 L1577.2 1194.78 L1579.2 1195.03 L1581.2 1195.27 L1583.2 1195.47 L1585.2 1195.67 L1587.2 1195.87 L1589.2 1196.07 L1591.2 1196.27 L1593.2 1196.47 L1595.2 1196.59 L1597.2 1196.66 L1599.2 1196.73 L1601.2 1196.79 L1603.2 1196.86 L1605.2 1196.93 L1607.2 1196.99 L1609.2 1197.06 L1611.2 1197.13 L1613.2 1197.19 L1615.2 1197.26 L1617.2 1197.33 L1619.2 1197.39 L1621.2 1197.46 L1623.2 1197.53 L1625.2 1197.59 L1627.2 1197.66 L1629.2 1197.73 L1631.2 1197.79 L1633.2 1197.86 L1635.2 1197.93 L1637.2 1198.03 L1639.2 1198.13 L1641.2 1198.23 L1643.2 1198.33 L1645.2 1198.43 L1647.2 1198.53 L1649.2 1198.63 L1651.2 1198.73 L1653.2 1198.83 L1655.2 1198.93 L1657.2 1199.03 L1659.2 1199.13 L1661.2 1199.23 L1663.2 1199.32 L1665.2 1199.39 L1667.2 1199.47 L1669.2 1199.55 L1671.2 1199.63 L1673.2 1199.7 L1675.2 1199.78 L1677.2 1199.86 L1679.2 1199.93 L1681.2 1200.01 L1683.2 1200.09 L1685.2 1200.16 L1687.2 1200.24 L1689.2 1200.32 L1691.2 1200.39 L1693.2 1200.47 L1695.2 1200.55 L1697.2 1200.63 L1699.2 1200.68 L1701.2 1200.73 L1703.2 1200.79 L1705.2 1200.84 L1707.2 1200.89 L1709.2 1200.94 L1711.2 1201 L1713.2 1201.05 L1715.2 1201.1 L1717.2 1201.15 L1719.2 1201.21 L1721.2 1201.26 L1723.2 1201.31 L1725.2 1201.37 L1727.2 1201.42 L1729.2 1201.47 L1731.2 1201.52 L1733.2 1201.58 L1735.2 1201.63 L1737.2 1201.68 L1739.2 1201.73 L1741.2 1201.79 L1743.2 1201.84 L1745.2 1201.89 L1747.2 1201.94 L1749.2 1201.99 L1751.2 1201.99 L1753.2 1201.99 L1755.2 1201.99 L1757.2 1201.99 L1759.2 1201.99 L1761.2 1201.99 L1763.2 1201.99 L1765.2 1201.99 L1767.2 1201.99 L1769.2 1201.99 L1771.2 1201.99 L1773.2 1201.99 L1775.2 1201.99 L1777.2 1201.99 L1779.2 1201.99 L1781.2 1201.99 L1783.2 1201.99 L1785.2 1201.99 L1787.2 1201.99 L1789.2 1201.99 L1791.2 1201.99 L1793.2 1201.99 L1795.2 1201.99 L1797.2 1201.99 L1799.2 1201.99 L1801.2 1201.99 L1803.2 1201.99 L1805.2 1201.99 L1807.2 1201.99 L1809.2 1201.99 L1811.2 1201.99 L1813.2 1201.99 L1815.2 1201.99 L1817.2 1201.99 L1819.2 1201.99 L1821.2 1201.99 L1823.2 1201.99 L1825.2 1201.99 L1827.2 1201.99 L1829.2 1201.99 L1831.2 1201.99 L1833.2 1201.99 L1835.2 1201.99 L1837.2 1201.99 L1839.2 1201.99 L1841.2 1201.99 L1843.2 1201.99 L1845.2 1201.99 L1847.2 1201.99 L1849.2 1201.99 L1851.2 1201.99 L1853.2 1201.99 L1855.2 1201.99 L1857.2 1201.99 L1859.2 1201.99 L1861.2 1201.99 L1863.2 1201.99 L1865.2 1201.99 L1867.2 1201.99 L1869.2 1201.99 L1871.2 1201.99 L1873.2 1201.99 L1875.2 1201.99 L1877.2 1201.99 L1879.2 1201.99 L1881.2 1201.99 L1883.2 1201.99 L1885.2 1201.99 L1887.2 1201.99 L1889.2 1201.99 L1891.2 1201.99 L1893.2 1201.99 L1895.2 1201.99 L1897.2 1201.99 L1899.2 1201.99 L1901.2 1201.99 L1903.2 1201.99 L1905.2 1201.99 L1907.2 1201.99 L1909.2 1201.99 L1911.2 1201.99 L1913.2 1201.99 L1915.2 1201.99 L1917.2 1201.99 L1919.2 1201.99 L1921.2 1202.03 L1923.2 1202.12 L1925.2 1202.22 L1927.2 1202.31 L1929.2 1202.4 L1931.2 1202.49 L1933.2 1202.58 L1935.2 1202.67 L1937.2 1202.77 L1939.2 1202.86 L1941.2 1202.95 L1943.2 1203.04 L1945.2 1203.13 L1947.2 1203.22 L1949.2 1203.32 L1951.2 1203.34 L1953.2 1203.31 L1955.2 1203.29 L1957.2 1203.26 L1959.2 1203.23 L1961.2 1203.21 L1963.2 1203.18 L1965.2 1203.16 L1967.2 1203.13 L1969.2 1203.11 L1971.2 1203.08 L1973.2 1203.06 L1975.2 1203.03 L1977.2 1203 L1979.2 1202.98 L1981.2 1202.95 L1983.2 1202.93 L1985.2 1202.9 L1987.2 1202.88 L1989.2 1202.85 L1991.2 1202.82 L1993.2 1202.8 L1995.2 1202.77 L1997.2 1202.75 L1999.2 1202.72 L2001.2 1202.7 L2003.2 1202.67 L2005.2 1203.06 L2007.2 1203.94 L2009.2 1203.94 L2011.2 1203.94 L2013.2 1203.94 L2015.2 1203.94 L2017.2 1203.94 L2019.2 1203.94 L2021.2 1203.94 L2023.2 1203.94 L2025.2 1203.94 L2027.2 1203.94 L2029.2 1203.94 L2031.2 1203.94 L2033.2 1203.94 L2035.2 1203.94 L2037.2 1203.94 L2039.2 1203.94 L2041.2 1203.94 L2043.2 1203.94 L2045.2 1203.94 L2047.2 1203.94 L2049.2 1203.94 L2051.2 1204.16 L2053.2 1205.16 L2055.2 1205.23 L2057.2 1205.23 L2059.2 1205.23 L2061.2 1205.23 L2063.2 1205.23 L2065.2 1205.23 L2067.2 1205.23 L2069.2 1205.23 L2071.2 1205.23 L2073.2 1205.23 L2075.2 1205.23 L2077.2 1205.23 L2079.2 1205.23 L2081.2 1205.23 L2083.2 1205.23 L2085.2 1205.23 L2087.2 1205.23 L2089.2 1205.23 L2091.2 1205.23 L2093.2 1205.23 L2095.2 1205.23 L2097.2 1205.23 L2099.2 1205.23 L2101.2 1205.23 L2103.2 1205.23 L2105.2 1205.23 L2107.2 1205.23 L2109.2 1205.23 L2111.2 1205.23 L2113.2 1205.23 L2115.2 1205.23 L2117.2 1205.23 L2119.2 1205.23 L2121.2 1205.23 L2123.2 1205.23 L2125.2 1205.23 L2127.2 1205.23 L2129.2 1205.23 L2131.2 1205.23 L2133.2 1205.23 L2135.2 1205.23 L2137.2 1205.23 L2139.2 1205.23 L2141.2 1205.23 L2143.2 1205.23 L2145.2 1205.23 L2147.2 1205.23 L2149.2 1205.23 L2151.2 1205.23 L2153.2 1205.23 L2155.2 1205.23 L2157.2 1205.23 L2159.2 1205.28 L2161.2 1205.68 L2163.2 1205.75 L2165.2 1205.75 L2167.2 1205.75 L2169.2 1205.75 L2171.2 1205.75 L2173.2 1205.75 L2175.2 1205.75 L2177.2 1205.75 L2179.2 1205.75 L2181.2 1205.75 L2183.2 1206.17 L2185.2 1206.78 L2187.2 1206.78 L2189.2 1206.78 L2191.2 1206.78 L2193.2 1206.78 L2195.2 1206.78 L2197.2 1206.78 L2199.2 1206.78 L2201.2 1206.78 L2203.2 1206.78 L2205.2 1206.78 L2207.2 1206.78 L2209.2 1206.78 L2211.2 1206.78 L2213.2 1206.78 L2215.2 1206.78 L2217.2 1206.78 L2219.2 1206.78 L2221.2 1206.78 L2223.2 1206.78 L2225.2 1206.78 L2227.2 1206.78 L2229.2 1206.78 L2231.2 1206.78 L2233.2 1206.78 L2235.2 1206.78 L2237.2 1206.78 L2239.2 1206.78 L2241.2 1206.78 L2243.2 1206.78 L2245.2 1206.78 L2247.2 1206.78 L2249.2 1206.73 L2251.2 1205.67 L2253.2 1204.6 L2255.2 1203.53 L2257.2 1202.71 L2259.2 1203.05 L2261.2 1203.38 L2263.2 1203.71 L2265.2 1204.09 L2267.2 1204.56 L2269.2 1205.02 L2271.2 1205.49 L2273.2 1205.75 L2275.2 1205.75 L2277.2 1205.75 L2279.2 1205.75 L2281.2 1205.75 L2283.2 1205.75 L2285.2 1205.75 L2287.2 1206.55 L2289.2 1206.78 L2291.2 1206.78 L2293.2 1206.78 L2295.2 1206.78 L2297.2 1206.78 L2299.2 1206.78 L2301.2 1206.78 L2303.2 1206.78 L2305.2 1206.78 L2307.2 1206.78 L2309.2 1206.78 L2311.2 1206.78 L2313.2 1206.78 L2315.2 1206.78 L2317.2 1206.78 L2319.2 1206.78 L2321.2 1206.78 L2323.2 1205.6 L2325.2 1205.23 L2327.2 1205.23 L2329.2 1205.23 L2331.2 1205.23 L2333.2 1205.23 L2335.2 1205.23 L2337.2 1205.23 L2339.2 1205.23 L2341.2 1205.23 L2343.2 1205.23 L2345.2 1205.23 L2347.2 1205.23 L2349.2 1205.23 L2351.2 1205.23 L2353.2 1205.86 L2355.2 1206.78 L2357.2 1206.78 L2359.2 1206.78 L2361.2 1206.78 L2363.2 1206.78 L2365.2 1206.78 L2367.2 1206.78 L2369.2 1206.78 L2371.2 1206.78 L2373.2 1206.78 L2375.2 1206.78 L2377.2 1204.36 L2379.2 1201.76 L2381.2 1200.31 L2383.2 1200.98 L2385.2 1201.65 L2387.2 1202.31 L2389.2 1202.66 L2391.2 1202.66 L2393.2 1202.66 L2395.2 1202.66 L2397.2 1202.66 L2399.2 1202.66 L2401.2 1202.66 L2403.2 1202.66 L2405.2 1203.42 L2407.2 1204.42 L2409.2 1205.23 L2411.2 1205.23 L2413.2 1205.23 L2415.2 1205.23 L2417.2 1205.23 L2419.2 1205.23 L2421.2 1205.23 L2423.2 1205.23 L2425.2 1205.23 L2427.2 1205.23 L2429.2 1205.23 L2431.2 1205.23 L2433.2 1201.44 L2435.2 1195.04 L2437.2 1192.51 L2439.2 1191.98 L2441.2 1193.08 L2443.2 1194.78 L2445.2 1196.27 L2447.2 1196.6 L2449.2 1196.93 L2451.2 1197.27 L2453.2 1197.5 L2455.2 1197.5" fill="none" stroke="#bfdc78" stroke-width="2.5" stroke-linejoin="round"/>
<path d="M1537 1187.5 L1557 1187" stroke="#e6d6a0" stroke-width="3"/>
<rect x="1388.8" y="1385.6" width="28" height="8" rx="4" fill="#bcd97a"/>
<text x="1432.8" y="1397.9" font-size="25" fill="#ccccdb" textLength="68.69" lengthAdjust="spacingAndGlyphs" class="a">Damp</text>
<rect x="1522.99" y="1385.6" width="28" height="8" rx="4" fill="#e6d6a0"/>
<text x="1566.99" y="1397.9" font-size="25" fill="#ccccdb" textLength="74.4" lengthAdjust="spacingAndGlyphs" class="a">Humid</text>
<rect x="14" y="1451" width="1228" height="514" rx="10" fill="#191b1f" stroke="#2e3036" stroke-width="2"/>
<text x="38.5" y="1502.3" font-size="29.5" fill="#ccccdb" textLength="200.9" lengthAdjust="spacingAndGlyphs" class="t">PM_2.5 (mass)</text>
<line x1="141.1" y1="1580.6" x2="1209.1" y2="1580.6" stroke="rgba(240,250,255,0.09)" stroke-width="1"/>
<text x="130.3" y="1588.6" font-size="25" fill="#ccccdb" text-anchor="end" textLength="90.4" lengthAdjust="spacingAndGlyphs" class="a">8 μg/m³</text>
<line x1="141.1" y1="1613.5" x2="1209.1" y2="1613.5" stroke="rgba(240,250,255,0.09)" stroke-width="1"/>
<text x="130.3" y="1621.5" font-size="25" fill="#ccccdb" text-anchor="end" textLength="90.4" lengthAdjust="spacingAndGlyphs" class="a">7 μg/m³</text>
<line x1="141.1" y1="1646.4" x2="1209.1" y2="1646.4" stroke="rgba(240,250,255,0.09)" stroke-width="1"/>
<text x="130.3" y="1654.4" font-size="25" fill="#ccccdb" text-anchor="end" textLength="90.4" lengthAdjust="spacingAndGlyphs" class="a">6 μg/m³</text>
<line x1="141.1" y1="1679.3" x2="1209.1" y2="1679.3" stroke="rgba(240,250,255,0.09)" stroke-width="1"/>
<text x="130.3" y="1687.3" font-size="25" fill="#ccccdb" text-anchor="end" textLength="90.4" lengthAdjust="spacingAndGlyphs" class="a">5 μg/m³</text>
<line x1="141.1" y1="1712.2" x2="1209.1" y2="1712.2" stroke="rgba(240,250,255,0.09)" stroke-width="1"/>
<text x="130.3" y="1720.2" font-size="25" fill="#ccccdb" text-anchor="end" textLength="90.4" lengthAdjust="spacingAndGlyphs" class="a">4 μg/m³</text>
<line x1="141.1" y1="1745.1" x2="1209.1" y2="1745.1" stroke="rgba(240,250,255,0.09)" stroke-width="1"/>
<text x="130.3" y="1753.1" font-size="25" fill="#ccccdb" text-anchor="end" textLength="90.4" lengthAdjust="spacingAndGlyphs" class="a">3 μg/m³</text>
<line x1="141.1" y1="1778" x2="1209.1" y2="1778" stroke="rgba(240,250,255,0.09)" stroke-width="1"/>
<text x="130.3" y="1786" font-size="25" fill="#ccccdb" text-anchor="end" textLength="90.4" lengthAdjust="spacingAndGlyphs" class="a">2 μg/m³</text>
<line x1="141.1" y1="1810.9" x2="1209.1" y2="1810.9" stroke="rgba(240,250,255,0.09)" stroke-width="1"/>
<text x="130.3" y="1818.9" font-size="25" fill="#ccccdb" text-anchor="end" textLength="90.4" lengthAdjust="spacingAndGlyphs" class="a">1 μg/m³</text>
<line x1="141.1" y1="1843.8" x2="1209.1" y2="1843.8" stroke="rgba(240,250,255,0.09)" stroke-width="1"/>
<text x="130.3" y="1851.8" font-size="25" fill="#ccccdb" text-anchor="end" textLength="90.4" lengthAdjust="spacingAndGlyphs" class="a">0 μg/m³</text>
<line x1="183.4" y1="1564.8" x2="183.4" y2="1851.3" stroke="rgba(240,250,255,0.09)" stroke-width="1"/>
<text x="182.4" y="1885.2" font-size="25" fill="#ccccdb" text-anchor="middle" class="a">18:00</text>
<line x1="317" y1="1564.8" x2="317" y2="1851.3" stroke="rgba(240,250,255,0.09)" stroke-width="1"/>
<text x="316" y="1885.2" font-size="25" fill="#ccccdb" text-anchor="middle" class="a">21:00</text>
<line x1="450.6" y1="1564.8" x2="450.6" y2="1851.3" stroke="rgba(240,250,255,0.09)" stroke-width="1"/>
<text x="449.6" y="1885.2" font-size="25" fill="#ccccdb" text-anchor="middle" class="a">00:00</text>
<line x1="584.2" y1="1564.8" x2="584.2" y2="1851.3" stroke="rgba(240,250,255,0.09)" stroke-width="1"/>
<text x="583.2" y="1885.2" font-size="25" fill="#ccccdb" text-anchor="middle" class="a">03:00</text>
<line x1="717.8" y1="1564.8" x2="717.8" y2="1851.3" stroke="rgba(240,250,255,0.09)" stroke-width="1"/>
<text x="716.8" y="1885.2" font-size="25" fill="#ccccdb" text-anchor="middle" class="a">06:00</text>
<line x1="851.4" y1="1564.8" x2="851.4" y2="1851.3" stroke="rgba(240,250,255,0.09)" stroke-width="1"/>
<text x="850.4" y="1885.2" font-size="25" fill="#ccccdb" text-anchor="middle" class="a">09:00</text>
<line x1="985" y1="1564.8" x2="985" y2="1851.3" stroke="rgba(240,250,255,0.09)" stroke-width="1"/>
<text x="984" y="1885.2" font-size="25" fill="#ccccdb" text-anchor="middle" class="a">12:00</text>
<line x1="1118.6" y1="1564.8" x2="1118.6" y2="1851.3" stroke="rgba(240,250,255,0.09)" stroke-width="1"/>
<text x="1117.6" y="1885.2" font-size="25" fill="#ccccdb" text-anchor="middle" class="a">15:00</text>
<path d="M141.1 1663.51h2.91V1843.8h-2.91zM144.81 1664.49h2.91V1843.8h-2.91zM148.51 1663.02h2.91V1843.8h-2.91zM152.22 1651.92h2.91V1843.8h-2.91zM207.82 1650.83h2.91V1843.8h-2.91zM211.53 1658.21h2.91V1843.8h-2.91zM215.23 1656.15h2.91V1843.8h-2.91zM218.94 1654.29h2.91V1843.8h-2.91zM222.65 1649.4h2.91V1843.8h-2.91zM226.35 1649.06h2.91V1843.8h-2.91zM496.93 1649.5h2.91V1843.8h-2.91zM515.47 1653.42h2.91V1843.8h-2.91zM519.17 1655.59h2.91V1843.8h-2.91zM522.88 1656.28h2.91V1843.8h-2.91zM526.59 1656.9h2.91V1843.8h-2.91zM530.29 1656.93h2.91V1843.8h-2.91zM534 1660.85h2.91V1843.8h-2.91zM537.71 1664.29h2.91V1843.8h-2.91zM541.41 1658.74h2.91V1843.8h-2.91zM545.12 1666.13h2.91V1843.8h-2.91zM548.83 1663.5h2.91V1843.8h-2.91zM552.53 1659.19h2.91V1843.8h-2.91zM556.24 1662.84h2.91V1843.8h-2.91zM559.95 1667.06h2.91V1843.8h-2.91zM563.65 1670.84h2.91V1843.8h-2.91zM567.36 1670.97h2.91V1843.8h-2.91zM571.07 1664.43h2.91V1843.8h-2.91zM574.77 1669h2.91V1843.8h-2.91zM578.48 1674.64h2.91V1843.8h-2.91zM582.19 1674.17h2.91V1843.8h-2.91zM585.89 1670.31h2.91V1843.8h-2.91zM589.6 1672.68h2.91V1843.8h-2.91zM593.3 1676.15h2.91V1843.8h-2.91zM597.01 1675.97h2.91V1843.8h-2.91zM600.72 1676.33h2.91V1843.8h-2.91zM604.42 1676.04h2.91V1843.8h-2.91zM608.13 1673.33h2.91V1843.8h-2.91zM611.84 1668.16h2.91V1843.8h-2.91zM615.54 1671.85h2.91V1843.8h-2.91zM619.25 1677.98h2.91V1843.8h-2.91zM622.96 1677.5h2.91V1843.8h-2.91zM626.66 1678.37h2.91V1843.8h-2.91zM630.37 1680.17h2.91V1843.8h-2.91zM634.08 1680.62h2.91V1843.8h-2.91zM637.78 1680.62h2.91V1843.8h-2.91zM641.49 1680.41h2.91V1843.8h-2.91zM645.2 1678.82h2.91V1843.8h-2.91zM648.9 1675.2h2.91V1843.8h-2.91zM652.61 1680.45h2.91V1843.8h-2.91zM656.32 1685.49h2.91V1843.8h-2.91zM660.02 1684.86h2.91V1843.8h-2.91zM663.73 1688.04h2.91V1843.8h-2.91zM667.44 1685.46h2.91V1843.8h-2.91zM671.14 1684.53h2.91V1843.8h-2.91zM674.85 1686.24h2.91V1843.8h-2.91zM678.56 1697.41h2.91V1843.8h-2.91zM682.26 1696.32h2.91V1843.8h-2.91zM685.97 1698h2.91V1843.8h-2.91zM689.68 1692.32h2.91V1843.8h-2.91zM693.38 1693.24h2.91V1843.8h-2.91zM697.09 1698.36h2.91V1843.8h-2.91zM700.8 1689.05h2.91V1843.8h-2.91zM704.5 1687.31h2.91V1843.8h-2.91zM708.21 1690.24h2.91V1843.8h-2.91zM711.92 1692.83h2.91V1843.8h-2.91zM715.62 1699.43h2.91V1843.8h-2.91zM719.33 1706.16h2.91V1843.8h-2.91zM723.04 1702.11h2.91V1843.8h-2.91zM726.74 1705.81h2.91V1843.8h-2.91zM730.45 1704.78h2.91V1843.8h-2.91zM734.16 1704.37h2.91V1843.8h-2.91zM737.86 1706.04h2.91V1843.8h-2.91zM741.57 1705.4h2.91V1843.8h-2.91zM745.28 1710.23h2.91V1843.8h-2.91zM748.98 1707.19h2.91V1843.8h-2.91zM752.69 1709.75h2.91V1843.8h-2.91zM756.4 1708.79h2.91V1843.8h-2.91zM760.1 1709.9h2.91V1843.8h-2.91zM763.81 1708.2h2.91V1843.8h-2.91zM767.51 1705.96h2.91V1843.8h-2.91zM771.22 1707.37h2.91V1843.8h-2.91zM774.93 1701.69h2.91V1843.8h-2.91zM778.63 1701.71h2.91V1843.8h-2.91zM782.34 1702.93h2.91V1843.8h-2.91zM786.05 1703.98h2.91V1843.8h-2.91zM789.75 1707.08h2.91V1843.8h-2.91zM793.46 1707.75h2.91V1843.8h-2.91zM797.17 1717.16h2.91V1843.8h-2.91zM800.87 1718.88h2.91V1843.8h-2.91zM804.58 1713.39h2.91V1843.8h-2.91zM808.29 1716.28h2.91V1843.8h-2.91zM811.99 1712.75h2.91V1843.8h-2.91zM815.7 1716.39h2.91V1843.8h-2.91zM819.41 1711.87h2.91V1843.8h-2.91zM823.11 1712.75h2.91V1843.8h-2.91zM826.82 1719.43h2.91V1843.8h-2.91zM830.53 1717.78h2.91V1843.8h-2.91zM834.23 1712.25h2.91V1843.8h-2.91zM837.94 1716.77h2.91V1843.8h-2.91zM841.65 1713.34h2.91V1843.8h-2.91zM845.35 1717.94h2.91V1843.8h-2.91zM849.06 1720.51h2.91V1843.8h-2.91zM852.77 1716.11h2.91V1843.8h-2.91zM856.47 1709.37h2.91V1843.8h-2.91zM860.18 1711.71h2.91V1843.8h-2.91zM863.89 1713.16h2.91V1843.8h-2.91zM867.59 1711.22h2.91V1843.8h-2.91zM871.3 1710.35h2.91V1843.8h-2.91zM875.01 1719.45h2.91V1843.8h-2.91zM878.71 1725.09h2.91V1843.8h-2.91zM882.42 1724.07h2.91V1843.8h-2.91zM886.13 1725.22h2.91V1843.8h-2.91zM889.83 1725.55h2.91V1843.8h-2.91zM893.54 1723.82h2.91V1843.8h-2.91zM897.25 1733.56h2.91V1843.8h-2.91zM900.95 1733.45h2.91V1843.8h-2.91zM904.66 1734.33h2.91V1843.8h-2.91zM908.37 1736.36h2.91V1843.8h-2.91zM912.07 1732.08h2.91V1843.8h-2.91zM915.78 1738.67h2.91V1843.8h-2.91zM919.49 1737.39h2.91V1843.8h-2.91zM923.19 1741.55h2.91V1843.8h-2.91zM926.9 1739.15h2.91V1843.8h-2.91zM930.61 1740.79h2.91V1843.8h-2.91zM934.31 1740.34h2.91V1843.8h-2.91zM938.02 1734.8h2.91V1843.8h-2.91zM941.73 1736.12h2.91V1843.8h-2.91zM945.43 1740.07h2.91V1843.8h-2.91zM949.14 1735.48h2.91V1843.8h-2.91zM952.84 1740.8h2.91V1843.8h-2.91zM956.55 1744.66h2.91V1843.8h-2.91zM960.26 1741.64h2.91V1843.8h-2.91zM963.96 1743.32h2.91V1843.8h-2.91zM967.67 1747.6h2.91V1843.8h-2.91zM971.38 1740.58h2.91V1843.8h-2.91zM975.08 1737.73h2.91V1843.8h-2.91zM978.79 1732.71h2.91V1843.8h-2.91zM982.5 1739.66h2.91V1843.8h-2.91zM986.2 1743.16h2.91V1843.8h-2.91zM989.91 1743.42h2.91V1843.8h-2.91zM993.62 1745.18h2.91V1843.8h-2.91zM997.32 1745.05h2.91V1843.8h-2.91zM1001.03 1741.16h2.91V1843.8h-2.91zM1004.74 1743.84h2.91V1843.8h-2.91zM1008.44 1741.01h2.91V1843.8h-2.91zM1012.15 1742.82h2.91V1843.8h-2.91zM1015.86 1742.18h2.91V1843.8h-2.91zM1019.56 1738.18h2.91V1843.8h-2.91zM1023.27 1741.94h2.91V1843.8h-2.91zM1026.98 1751.42h2.91V1843.8h-2.91zM1030.68 1749.11h2.91V1843.8h-2.91zM1034.39 1754.51h2.91V1843.8h-2.91zM1038.1 1754.74h2.91V1843.8h-2.91zM1041.8 1749.46h2.91V1843.8h-2.91zM1045.51 1755.42h2.91V1843.8h-2.91zM1049.22 1759.91h2.91V1843.8h-2.91zM1052.92 1760.38h2.91V1843.8h-2.91zM1056.63 1756.04h2.91V1843.8h-2.91zM1060.34 1754.45h2.91V1843.8h-2.91zM1064.04 1760.33h2.91V1843.8h-2.91zM1067.75 1754.38h2.91V1843.8h-2.91zM1071.46 1754.91h2.91V1843.8h-2.91zM1075.16 1757.11h2.91V1843.8h-2.91zM1078.87 1759.68h2.91V1843.8h-2.91zM1082.58 1764.02h2.91V1843.8h-2.91zM1086.28 1764.53h2.91V1843.8h-2.91zM1089.99 1757.24h2.91V1843.8h-2.91zM1093.7 1762.96h2.91V1843.8h-2.91zM1097.4 1759.28h2.91V1843.8h-2.91zM1101.11 1762.81h2.91V1843.8h-2.91zM1104.82 1752.59h2.91V1843.8h-2.91zM1108.52 1769.01h2.91V1843.8h-2.91zM1112.23 1771.41h2.91V1843.8h-2.91zM1115.94 1772.34h2.91V1843.8h-2.91zM1119.64 1775.26h2.91V1843.8h-2.91zM1123.35 1781.4h2.91V1843.8h-2.91zM1127.05 1780.14h2.91V1843.8h-2.91zM1130.76 1777.53h2.91V1843.8h-2.91zM1134.47 1775.22h2.91V1843.8h-2.91zM1138.17 1777.1h2.91V1843.8h-2.91zM1141.88 1779.74h2.91V1843.8h-2.91zM1145.59 1771.94h2.91V1843.8h-2.91zM1149.29 1774.42h2.91V1843.8h-2.91zM1153 1775.9h2.91V1843.8h-2.91zM1156.71 1773.9h2.91V1843.8h-2.91zM1160.41 1772.51h2.91V1843.8h-2.91zM1164.12 1775.55h2.91V1843.8h-2.91zM1167.83 1774.63h2.91V1843.8h-2.91zM1171.53 1773.11h2.91V1843.8h-2.91zM1175.24 1771.51h2.91V1843.8h-2.91zM1178.95 1774.99h2.91V1843.8h-2.91zM1182.65 1773.17h2.91V1843.8h-2.91zM1186.36 1780.38h2.91V1843.8h-2.91zM1190.07 1779.96h2.91V1843.8h-2.91zM1193.77 1782.34h2.91V1843.8h-2.91zM1197.48 1781.9h2.91V1843.8h-2.91zM1201.19 1782.57h2.91V1843.8h-2.91zM1204.89 1785.9h2.91V1843.8h-2.91z" fill="#85bd72"/>
<path d="M155.93 1627.85h2.91V1843.8h-2.91zM159.63 1591.37h2.91V1843.8h-2.91zM163.34 1603.01h2.91V1843.8h-2.91zM167.05 1599.48h2.91V1843.8h-2.91zM170.75 1614.31h2.91V1843.8h-2.91zM174.46 1620.51h2.91V1843.8h-2.91zM178.17 1631.57h2.91V1843.8h-2.91zM181.87 1634.21h2.91V1843.8h-2.91zM185.58 1629.03h2.91V1843.8h-2.91zM189.29 1618.98h2.91V1843.8h-2.91zM192.99 1626.1h2.91V1843.8h-2.91zM196.7 1637.47h2.91V1843.8h-2.91zM200.41 1643.49h2.91V1843.8h-2.91zM204.11 1644.87h2.91V1843.8h-2.91zM230.06 1644.27h2.91V1843.8h-2.91zM233.76 1644.75h2.91V1843.8h-2.91zM237.47 1643.76h2.91V1843.8h-2.91zM241.18 1640.48h2.91V1843.8h-2.91zM244.88 1642.97h2.91V1843.8h-2.91zM248.59 1636.77h2.91V1843.8h-2.91zM252.3 1634.91h2.91V1843.8h-2.91zM256 1634.23h2.91V1843.8h-2.91zM259.71 1633.94h2.91V1843.8h-2.91zM263.42 1635.51h2.91V1843.8h-2.91zM267.12 1635.32h2.91V1843.8h-2.91zM270.83 1641.51h2.91V1843.8h-2.91zM274.54 1633.33h2.91V1843.8h-2.91zM278.24 1636.02h2.91V1843.8h-2.91zM281.95 1631.91h2.91V1843.8h-2.91zM285.66 1629.65h2.91V1843.8h-2.91zM289.36 1629.91h2.91V1843.8h-2.91zM293.07 1635.41h2.91V1843.8h-2.91zM296.78 1630.94h2.91V1843.8h-2.91zM300.48 1629.5h2.91V1843.8h-2.91zM304.19 1632.75h2.91V1843.8h-2.91zM307.9 1637.97h2.91V1843.8h-2.91zM311.6 1636.69h2.91V1843.8h-2.91zM315.31 1644.58h2.91V1843.8h-2.91zM319.02 1637.75h2.91V1843.8h-2.91zM322.72 1646.6h2.91V1843.8h-2.91zM326.43 1633.56h2.91V1843.8h-2.91zM330.14 1635.45h2.91V1843.8h-2.91zM333.84 1639.05h2.91V1843.8h-2.91zM337.55 1640.67h2.91V1843.8h-2.91zM341.26 1636.91h2.91V1843.8h-2.91zM344.96 1639.82h2.91V1843.8h-2.91zM348.67 1639.82h2.91V1843.8h-2.91zM352.38 1639.82h2.91V1843.8h-2.91zM356.08 1635.47h2.91V1843.8h-2.91zM359.79 1631.84h2.91V1843.8h-2.91zM363.5 1638.05h2.91V1843.8h-2.91zM367.2 1633.25h2.91V1843.8h-2.91zM370.91 1640.08h2.91V1843.8h-2.91zM374.62 1638.58h2.91V1843.8h-2.91zM378.32 1630.73h2.91V1843.8h-2.91zM382.03 1634.51h2.91V1843.8h-2.91zM385.74 1637.47h2.91V1843.8h-2.91zM389.44 1636.1h2.91V1843.8h-2.91zM393.15 1637.52h2.91V1843.8h-2.91zM396.86 1635.34h2.91V1843.8h-2.91zM400.56 1635.68h2.91V1843.8h-2.91zM404.27 1627.6h2.91V1843.8h-2.91zM407.98 1636.48h2.91V1843.8h-2.91zM411.68 1636.53h2.91V1843.8h-2.91zM415.39 1632.13h2.91V1843.8h-2.91zM419.09 1635.49h2.91V1843.8h-2.91zM422.8 1624.03h2.91V1843.8h-2.91zM426.51 1624.79h2.91V1843.8h-2.91zM430.21 1631.81h2.91V1843.8h-2.91zM433.92 1628.63h2.91V1843.8h-2.91zM437.63 1618.47h2.91V1843.8h-2.91zM441.33 1623.93h2.91V1843.8h-2.91zM445.04 1623.39h2.91V1843.8h-2.91zM448.75 1621.1h2.91V1843.8h-2.91zM452.45 1630.88h2.91V1843.8h-2.91zM456.16 1626.24h2.91V1843.8h-2.91zM459.87 1630.23h2.91V1843.8h-2.91zM463.57 1627.37h2.91V1843.8h-2.91zM467.28 1624.86h2.91V1843.8h-2.91zM470.99 1633.19h2.91V1843.8h-2.91zM474.69 1632.28h2.91V1843.8h-2.91zM478.4 1638.49h2.91V1843.8h-2.91zM482.11 1643.04h2.91V1843.8h-2.91zM485.81 1639.31h2.91V1843.8h-2.91zM489.52 1637.23h2.91V1843.8h-2.91zM493.23 1645.72h2.91V1843.8h-2.91zM500.64 1646.76h2.91V1843.8h-2.91zM504.35 1639.27h2.91V1843.8h-2.91zM508.05 1637.38h2.91V1843.8h-2.91zM511.76 1643.15h2.91V1843.8h-2.91z" fill="#e2ba53"/>
<rect x="39.6" y="1918" width="28" height="8" rx="4" fill="#85bd72"/>
<text x="83.6" y="1930.3" font-size="25" fill="#ccccdb" textLength="63.01" lengthAdjust="spacingAndGlyphs" class="a">Good</text>
<rect x="168.11" y="1918" width="28" height="8" rx="4" fill="#e2ba53"/>
<text x="212.11" y="1930.3" font-size="25" fill="#ccccdb" textLength="108.81" lengthAdjust="spacingAndGlyphs" class="a">Moderate</text>
<rect x="1260" y="1451" width="1228" height="514" rx="10" fill="#191b1f" stroke="#2e3036" stroke-width="2"/>
<text x="1284.5" y="1502.3" font-size="29.5" fill="#ccccdb" textLength="206" lengthAdjust="spacingAndGlyphs" class="t">Particle Counts</text>
<circle cx="1541" cy="1491.7" r="12" fill="none" stroke="#9a9ba3" stroke-width="2.6"/>
<circle cx="1541" cy="1486.4" r="1.9" fill="#9a9ba3"/>
<path d="M1541 1490.5V1497" stroke="#9a9ba3" stroke-width="2.8" stroke-linecap="round"/>
<line x1="1373.8" y1="1827.34" x2="2455.5" y2="1827.34" stroke="rgba(240,250,255,0.09)" stroke-width="1"/>
<line x1="1373.8" y1="1817.48" x2="2455.5" y2="1817.48" stroke="rgba(240,250,255,0.09)" stroke-width="1"/>
<line x1="1373.8" y1="1810.48" x2="2455.5" y2="1810.48" stroke="rgba(240,250,255,0.09)" stroke-width="1"/>
<line x1="1373.8" y1="1805.06" x2="2455.5" y2="1805.06" stroke="rgba(240,250,255,0.09)" stroke-width="1"/>
<line x1="1373.8" y1="1800.62" x2="2455.5" y2="1800.62" stroke="rgba(240,250,255,0.09)" stroke-width="1"/>
<line x1="1373.8" y1="1796.87" x2="2455.5" y2="1796.87" stroke="rgba(240,250,255,0.09)" stroke-width="1"/>
<line x1="1373.8" y1="1793.63" x2="2455.5" y2="1793.63" stroke="rgba(240,250,255,0.09)" stroke-width="1"/>
<line x1="1373.8" y1="1790.76" x2="2455.5" y2="1790.76" stroke="rgba(240,250,255,0.09)" stroke-width="1"/>
<line x1="1373.8" y1="1771.34" x2="2455.5" y2="1771.34" stroke="rgba(240,250,255,0.09)" stroke-width="1"/>
<line x1="1373.8" y1="1761.48" x2="2455.5" y2="1761.48" stroke="rgba(240,250,255,0.09)" stroke-width="1"/>
<line x1="1373.8" y1="1754.48" x2="2455.5" y2="1754.48" stroke="rgba(240,250,255,0.09)" stroke-width="1"/>
<line x1="1373.8" y1="1749.06" x2="2455.5" y2="1749.06" stroke="rgba(240,250,255,0.09)" stroke-width="1"/>
<line x1="1373.8" y1="1744.62" x2="2455.5" y2="1744.62" stroke="rgba(240,250,255,0.09)" stroke-width="1"/>
<line x1="1373.8" y1="1740.87" x2="2455.5" y2="1740.87" stroke="rgba(240,250,255,0.09)" stroke-width="1"/>
<line x1="1373.8" y1="1737.63" x2="2455.5" y2="1737.63" stroke="rgba(240,250,255,0.09)" stroke-width="1"/>
<line x1="1373.8" y1="1734.76" x2="2455.5" y2="1734.76" stroke="rgba(240,250,255,0.09)" stroke-width="1"/>
<line x1="1373.8" y1="1715.34" x2="2455.5" y2="1715.34" stroke="rgba(240,250,255,0.09)" stroke-width="1"/>
<line x1="1373.8" y1="1705.48" x2="2455.5" y2="1705.48" stroke="rgba(240,250,255,0.09)" stroke-width="1"/>
<line x1="1373.8" y1="1698.48" x2="2455.5" y2="1698.48" stroke="rgba(240,250,255,0.09)" stroke-width="1"/>
<line x1="1373.8" y1="1693.06" x2="2455.5" y2="1693.06" stroke="rgba(240,250,255,0.09)" stroke-width="1"/>
<line x1="1373.8" y1="1688.62" x2="2455.5" y2="1688.62" stroke="rgba(240,250,255,0.09)" stroke-width="1"/>
<line x1="1373.8" y1="1684.87" x2="2455.5" y2="1684.87" stroke="rgba(240,250,255,0.09)" stroke-width="1"/>
<line x1="1373.8" y1="1681.63" x2="2455.5" y2="1681.63" stroke="rgba(240,250,255,0.09)" stroke-width="1"/>
<line x1="1373.8" y1="1678.76" x2="2455.5" y2="1678.76" stroke="rgba(240,250,255,0.09)" stroke-width="1"/>
<line x1="1373.8" y1="1659.34" x2="2455.5" y2="1659.34" stroke="rgba(240,250,255,0.09)" stroke-width="1"/>
<line x1="1373.8" y1="1649.48" x2="2455.5" y2="1649.48" stroke="rgba(240,250,255,0.09)" stroke-width="1"/>
<line x1="1373.8" y1="1642.48" x2="2455.5" y2="1642.48" stroke="rgba(240,250,255,0.09)" stroke-width="1"/>
<line x1="1373.8" y1="1637.06" x2="2455.5" y2="1637.06" stroke="rgba(240,250,255,0.09)" stroke-width="1"/>
<line x1="1373.8" y1="1632.62" x2="2455.5" y2="1632.62" stroke="rgba(240,250,255,0.09)" stroke-width="1"/>
<line x1="1373.8" y1="1628.87" x2="2455.5" y2="1628.87" stroke="rgba(240,250,255,0.09)" stroke-width="1"/>
<line x1="1373.8" y1="1625.63" x2="2455.5" y2="1625.63" stroke="rgba(240,250,255,0.09)" stroke-width="1"/>
<line x1="1373.8" y1="1622.76" x2="2455.5" y2="1622.76" stroke="rgba(240,250,255,0.09)" stroke-width="1"/>
<line x1="1373.8" y1="1603.34" x2="2455.5" y2="1603.34" stroke="rgba(240,250,255,0.09)" stroke-width="1"/>
<line x1="1373.8" y1="1593.48" x2="2455.5" y2="1593.48" stroke="rgba(240,250,255,0.09)" stroke-width="1"/>
<line x1="1373.8" y1="1586.48" x2="2455.5" y2="1586.48" stroke="rgba(240,250,255,0.09)" stroke-width="1"/>
<line x1="1373.8" y1="1581.06" x2="2455.5" y2="1581.06" stroke="rgba(240,250,255,0.09)" stroke-width="1"/>
<line x1="1373.8" y1="1576.62" x2="2455.5" y2="1576.62" stroke="rgba(240,250,255,0.09)" stroke-width="1"/>
<line x1="1373.8" y1="1572.87" x2="2455.5" y2="1572.87" stroke="rgba(240,250,255,0.09)" stroke-width="1"/>
<line x1="1373.8" y1="1569.63" x2="2455.5" y2="1569.63" stroke="rgba(240,250,255,0.09)" stroke-width="1"/>
<line x1="1373.8" y1="1566.76" x2="2455.5" y2="1566.76" stroke="rgba(240,250,255,0.09)" stroke-width="1"/>
<line x1="1373.8" y1="1564.2" x2="2455.5" y2="1564.2" stroke="rgba(240,250,255,0.09)" stroke-width="1"/>
<text x="1362" y="1572.2" font-size="25" fill="#ccccdb" text-anchor="end" textLength="55.62" lengthAdjust="spacingAndGlyphs" class="a">1000</text>
<line x1="1373.8" y1="1620.2" x2="2455.5" y2="1620.2" stroke="rgba(240,250,255,0.09)" stroke-width="1"/>
<text x="1362" y="1628.2" font-size="25" fill="#ccccdb" text-anchor="end" textLength="41.72" lengthAdjust="spacingAndGlyphs" class="a">100</text>
<line x1="1373.8" y1="1676.2" x2="2455.5" y2="1676.2" stroke="rgba(240,250,255,0.09)" stroke-width="1"/>
<text x="1362" y="1684.2" font-size="25" fill="#ccccdb" text-anchor="end" textLength="27.81" lengthAdjust="spacingAndGlyphs" class="a">10</text>
<line x1="1373.8" y1="1732.2" x2="2455.5" y2="1732.2" stroke="rgba(240,250,255,0.09)" stroke-width="1"/>
<text x="1362" y="1740.2" font-size="25" fill="#ccccdb" text-anchor="end" textLength="13.91" lengthAdjust="spacingAndGlyphs" class="a">1</text>
<line x1="1373.8" y1="1788.2" x2="2455.5" y2="1788.2" stroke="rgba(240,250,255,0.09)" stroke-width="1"/>
<text x="1362" y="1796.2" font-size="25" fill="#ccccdb" text-anchor="end" textLength="62.58" lengthAdjust="spacingAndGlyphs" class="a">0.100</text>
<line x1="1373.8" y1="1844.2" x2="2455.5" y2="1844.2" stroke="rgba(240,250,255,0.09)" stroke-width="1"/>
<text x="1362" y="1852.2" font-size="25" fill="#ccccdb" text-anchor="end" textLength="76.48" lengthAdjust="spacingAndGlyphs" class="a">0.0100</text>
<line x1="1416.4" y1="1564.2" x2="1416.4" y2="1851.7" stroke="rgba(240,250,255,0.09)" stroke-width="1"/>
<text x="1415.4" y="1885.2" font-size="25" fill="#ccccdb" text-anchor="middle" class="a">18:00</text>
<line x1="1551.55" y1="1564.2" x2="1551.55" y2="1851.7" stroke="rgba(240,250,255,0.09)" stroke-width="1"/>
<text x="1550.55" y="1885.2" font-size="25" fill="#ccccdb" text-anchor="middle" class="a">21:00</text>
<line x1="1686.7" y1="1564.2" x2="1686.7" y2="1851.7" stroke="rgba(240,250,255,0.09)" stroke-width="1"/>
<text x="1685.7" y="1885.2" font-size="25" fill="#ccccdb" text-anchor="middle" class="a">00:00</text>
<line x1="1821.85" y1="1564.2" x2="1821.85" y2="1851.7" stroke="rgba(240,250,255,0.09)" stroke-width="1"/>
<text x="1820.85" y="1885.2" font-size="25" fill="#ccccdb" text-anchor="middle" class="a">03:00</text>
<line x1="1957" y1="1564.2" x2="1957" y2="1851.7" stroke="rgba(240,250,255,0.09)" stroke-width="1"/>
<text x="1956" y="1885.2" font-size="25" fill="#ccccdb" text-anchor="middle" class="a">06:00</text>
<line x1="2092.15" y1="1564.2" x2="2092.15" y2="1851.7" stroke="rgba(240,250,255,0.09)" stroke-width="1"/>
<text x="2091.15" y="1885.2" font-size="25" fill="#ccccdb" text-anchor="middle" class="a">09:00</text>
<line x1="2227.3" y1="1564.2" x2="2227.3" y2="1851.7" stroke="rgba(240,250,255,0.09)" stroke-width="1"/>
<text x="2226.3" y="1885.2" font-size="25" fill="#ccccdb" text-anchor="middle" class="a">12:00</text>
<line x1="2362.45" y1="1564.2" x2="2362.45" y2="1851.7" stroke="rgba(240,250,255,0.09)" stroke-width="1"/>
<text x="2361.45" y="1885.2" font-size="25" fill="#ccccdb" text-anchor="middle" class="a">15:00</text>
<clipPath id="pcClip"><rect x="1373.8" y="1560" width="1081.7" height="284.2"/></clipPath>
<path d="M1373.8 1602.89 L1377.56 1601.18 L1381.32 1601.61 L1385.08 1597.55 L1388.84 1594.13 L1392.6 1592.37 L1396.36 1590.43 L1400.12 1592.74 L1403.88 1592.86 L1407.64 1594.86 L1411.4 1594.79 L1415.16 1597.19 L1418.92 1598.47 L1422.68 1593.53 L1426.44 1590.75 L1430.2 1594.35 L1433.96 1593.02 L1437.72 1597.08 L1441.49 1596.13 L1445.25 1598.01 L1449.01 1596.57 L1452.77 1598.04 L1456.53 1596.82 L1460.29 1597.06 L1464.05 1597.41 L1467.81 1596.35 L1471.57 1597.52 L1475.33 1596.93 L1479.09 1598.1 L1482.85 1596.1 L1486.61 1597.91 L1490.37 1596.13 L1494.13 1596.26 L1497.89 1596.83 L1501.65 1596.64 L1505.41 1598.48 L1509.17 1596.64 L1512.93 1596.01 L1516.69 1596.64 L1520.45 1596.01 L1524.21 1597.02 L1527.97 1596.36 L1531.73 1597.06 L1535.49 1595.99 L1539.25 1596.32 L1543.01 1598.56 L1546.77 1596.59 L1550.53 1595.98 L1554.29 1596.16 L1558.05 1597.03 L1561.81 1596.96 L1565.57 1596.34 L1569.33 1596.89 L1573.09 1597.51 L1576.86 1597.4 L1580.62 1596.99 L1584.38 1597.81 L1588.14 1595.11 L1591.9 1595.25 L1595.66 1596.27 L1599.42 1596.43 L1603.18 1595.43 L1606.94 1597.14 L1610.7 1596.19 L1614.46 1595.77 L1618.22 1596.84 L1621.98 1596.68 L1625.74 1595.97 L1629.5 1594.93 L1633.26 1596.18 L1637.02 1596.54 L1640.78 1594.76 L1644.54 1594.86 L1648.3 1595.64 L1652.06 1593.71 L1655.82 1594.33 L1659.58 1594.57 L1663.34 1593.48 L1667.1 1595.14 L1670.86 1593.25 L1674.62 1595.73 L1678.38 1595.29 L1682.14 1593.42 L1685.9 1593.37 L1689.66 1593.39 L1693.42 1593.96 L1697.18 1594.14 L1700.94 1594.41 L1704.7 1595.97 L1708.46 1597.11 L1712.23 1594.69 L1715.99 1597.26 L1719.75 1596.83 L1723.51 1595.47 L1727.27 1596.9 L1731.03 1596.81 L1734.79 1596.56 L1738.55 1597.27 L1742.31 1598.8 L1746.07 1597.06 L1749.83 1598.32 L1753.59 1598.75 L1757.35 1599.77 L1761.11 1598.58 L1764.87 1600.01 L1768.63 1599.88 L1772.39 1598.94 L1776.15 1600.55 L1779.91 1601.25 L1783.67 1600.88 L1787.43 1600.9 L1791.19 1601.34 L1794.95 1600.15 L1798.71 1599.85 L1802.47 1599.83 L1806.23 1599.88 L1809.99 1601.54 L1813.75 1601.63 L1817.51 1602.49 L1821.27 1600.19 L1825.03 1602.09 L1828.79 1602.52 L1832.55 1600.04 L1836.31 1602.38 L1840.07 1602.78 L1843.83 1600.76 L1847.6 1600.32 L1851.36 1601.4 L1855.12 1601.56 L1858.88 1602.96 L1862.64 1605.08 L1866.4 1604.69 L1870.16 1605.06 L1873.92 1603.62 L1877.68 1602.69 L1881.44 1605.14 L1885.2 1605.42 L1888.96 1605.81 L1892.72 1605.79 L1896.48 1604.92 L1900.24 1603.84 L1904 1605.75 L1907.76 1604.73 L1911.52 1605.04 L1915.28 1605.53 L1919.04 1606.54 L1922.8 1607.18 L1926.56 1605.99 L1930.32 1606.54 L1934.08 1608.44 L1937.84 1606.85 L1941.6 1607.75 L1945.36 1606.8 L1949.12 1606.74 L1952.88 1607.62 L1956.64 1607.13 L1960.4 1609.84 L1964.16 1609.57 L1967.92 1609.51 L1971.68 1609.46 L1975.44 1609.92 L1979.2 1610.58 L1982.97 1609.25 L1986.73 1609.72 L1990.49 1609.26 L1994.25 1609.73 L1998.01 1609.1 L2001.77 1610.42 L2005.53 1611.22 L2009.29 1611.54 L2013.05 1609.49 L2016.81 1611.02 L2020.57 1610.2 L2024.33 1610.56 L2028.09 1612.52 L2031.85 1611.09 L2035.61 1612.76 L2039.37 1611.95 L2043.13 1611.06 L2046.89 1613.13 L2050.65 1612.65 L2054.41 1612.31 L2058.17 1611.56 L2061.93 1612.3 L2065.69 1612.99 L2069.45 1612.65 L2073.21 1613.01 L2076.97 1612.94 L2080.73 1612.01 L2084.49 1612.38 L2088.25 1613.23 L2092.01 1614.36 L2095.77 1614.09 L2099.53 1612.67 L2103.29 1613.25 L2107.05 1614.85 L2110.81 1613.31 L2114.57 1614.42 L2118.34 1616.16 L2122.1 1615.97 L2125.86 1615.43 L2129.62 1615.9 L2133.38 1615.57 L2137.14 1617.09 L2140.9 1616.8 L2144.66 1615.64 L2148.42 1617.94 L2152.18 1616.9 L2155.94 1619.42 L2159.7 1619.48 L2163.46 1618.99 L2167.22 1619.01 L2170.98 1620.67 L2174.74 1620.92 L2178.5 1620.63 L2182.26 1621.49 L2186.02 1622.13 L2189.78 1621.24 L2193.54 1621.46 L2197.3 1623.64 L2201.06 1622.74 L2204.82 1623.47 L2208.58 1621.42 L2212.34 1621.75 L2216.1 1618.96 L2219.86 1617.68 L2223.62 1616.75 L2227.38 1619.93 L2231.14 1619.06 L2234.9 1618.58 L2238.66 1620.01 L2242.42 1620.27 L2246.18 1621.85 L2249.94 1622.96 L2253.71 1624.54 L2257.47 1624.74 L2261.23 1625.76 L2264.99 1625.14 L2268.75 1624.95 L2272.51 1626.51 L2276.27 1625.61 L2280.03 1629.08 L2283.79 1627.1 L2287.55 1627.69 L2291.31 1628.75 L2295.07 1631.25 L2298.83 1630.74 L2302.59 1630.19 L2306.35 1629.67 L2310.11 1630.89 L2313.87 1631.83 L2317.63 1630.18 L2321.39 1631.62 L2325.15 1630.52 L2328.91 1632.23 L2332.67 1633.3 L2336.43 1635.4 L2340.19 1634.11 L2343.95 1634.51 L2347.71 1634.74 L2351.47 1636.26 L2355.23 1637.75 L2358.99 1638.42 L2362.75 1638.29 L2366.51 1636.38 L2370.27 1637.67 L2374.03 1639.07 L2377.79 1638.89 L2381.55 1638.15 L2385.31 1639.01 L2389.08 1638.62 L2392.84 1639.16 L2396.6 1638.53 L2400.36 1638.59 L2404.12 1636.73 L2407.88 1638.36 L2411.64 1635.49 L2415.4 1636.01 L2419.16 1635.61 L2422.92 1637.13 L2426.68 1635.06 L2430.44 1633.85 L2434.2 1634.5 L2437.96 1635.45 L2441.72 1635.67 L2445.48 1637.15 L2449.24 1637.92 L2453 1640.3" fill="none" stroke="#85bd72" stroke-width="2" stroke-linejoin="round"/>
<path d="M1373.8 1648.54 L1377.56 1644.9 L1381.32 1642.59 L1385.08 1643.06 L1388.84 1638.54 L1392.6 1636.76 L1396.36 1636.51 L1400.12 1638.69 L1403.88 1638.88 L1407.64 1639.31 L1411.4 1638.43 L1415.16 1640.8 L1418.92 1636.8 L1422.68 1635.59 L1426.44 1634.89 L1430.2 1634.98 L1433.96 1639.89 L1437.72 1638.96 L1441.49 1637.44 L1445.25 1638.63 L1449.01 1639.97 L1452.77 1639.87 L1456.53 1637.45 L1460.29 1639.27 L1464.05 1639.01 L1467.81 1638.13 L1471.57 1639.46 L1475.33 1638.28 L1479.09 1639.95 L1482.85 1639.42 L1486.61 1638.93 L1490.37 1639.24 L1494.13 1637.07 L1497.89 1637.91 L1501.65 1639.65 L1505.41 1638.39 L1509.17 1637.07 L1512.93 1638.41 L1516.69 1639.25 L1520.45 1638.4 L1524.21 1638.58 L1527.97 1639.34 L1531.73 1637.25 L1535.49 1637.68 L1539.25 1637.41 L1543.01 1638.28 L1546.77 1637.73 L1550.53 1636.96 L1554.29 1638.35 L1558.05 1639.91 L1561.81 1639.56 L1565.57 1639.74 L1569.33 1638.51 L1573.09 1638.43 L1576.86 1640.68 L1580.62 1640.33 L1584.38 1638.41 L1588.14 1638.4 L1591.9 1639.36 L1595.66 1640.92 L1599.42 1640.08 L1603.18 1639.65 L1606.94 1639.3 L1610.7 1637.99 L1614.46 1640.71 L1618.22 1640.6 L1621.98 1638.13 L1625.74 1638.7 L1629.5 1639.49 L1633.26 1638.73 L1637.02 1638.93 L1640.78 1638.81 L1644.54 1640.01 L1648.3 1637.41 L1652.06 1637.19 L1655.82 1637.89 L1659.58 1637.54 L1663.34 1637.49 L1667.1 1636.18 L1670.86 1636.91 L1674.62 1637.11 L1678.38 1636.16 L1682.14 1637.9 L1685.9 1639.58 L1689.66 1638.49 L1693.42 1637.15 L1697.18 1638.29 L1700.94 1639.21 L1704.7 1638.58 L1708.46 1640.75 L1712.23 1639.19 L1715.99 1638.63 L1719.75 1639.79 L1723.51 1640.69 L1727.27 1640.09 L1731.03 1639.59 L1734.79 1641.93 L1738.55 1641.38 L1742.31 1643.1 L1746.07 1643.22 L1749.83 1643.69 L1753.59 1642.49 L1757.35 1644.35 L1761.11 1642.45 L1764.87 1643.52 L1768.63 1643.23 L1772.39 1644.45 L1776.15 1645.23 L1779.91 1643.74 L1783.67 1645.7 L1787.43 1644.27 L1791.19 1647.04 L1794.95 1646.79 L1798.71 1646.58 L1802.47 1646.87 L1806.23 1645.88 L1809.99 1647.48 L1813.75 1647.01 L1817.51 1646.47 L1821.27 1647.43 L1825.03 1646.12 L1828.79 1648.06 L1832.55 1648.33 L1836.31 1648.88 L1840.07 1649.66 L1843.83 1650.1 L1847.6 1650.74 L1851.36 1650.4 L1855.12 1649.99 L1858.88 1651.65 L1862.64 1650.86 L1866.4 1649.19 L1870.16 1650.64 L1873.92 1647.45 L1877.68 1647.39 L1881.44 1647.83 L1885.2 1649.46 L1888.96 1648.01 L1892.72 1647.33 L1896.48 1648.19 L1900.24 1648.79 L1904 1648.2 L1907.76 1649.31 L1911.52 1649.13 L1915.28 1651.2 L1919.04 1649.5 L1922.8 1648.97 L1926.56 1650.09 L1930.32 1649.46 L1934.08 1651.34 L1937.84 1650.37 L1941.6 1651.27 L1945.36 1651.39 L1949.12 1652.8 L1952.88 1651.64 L1956.64 1651.8 L1960.4 1652.6 L1964.16 1653.2 L1967.92 1653.7 L1971.68 1653.82 L1975.44 1654 L1979.2 1654.62 L1982.97 1653.61 L1986.73 1655.63 L1990.49 1655 L1994.25 1655.26 L1998.01 1655.14 L2001.77 1655.37 L2005.53 1656.61 L2009.29 1655.88 L2013.05 1656.88 L2016.81 1654.95 L2020.57 1656.27 L2024.33 1658.27 L2028.09 1657.88 L2031.85 1658.56 L2035.61 1658.82 L2039.37 1656.5 L2043.13 1658.1 L2046.89 1657.83 L2050.65 1657.13 L2054.41 1659.46 L2058.17 1658.6 L2061.93 1660.17 L2065.69 1659.6 L2069.45 1658.46 L2073.21 1658.31 L2076.97 1660.44 L2080.73 1659.2 L2084.49 1660.92 L2088.25 1659.04 L2092.01 1659.83 L2095.77 1660.4 L2099.53 1660.17 L2103.29 1660.22 L2107.05 1659.51 L2110.81 1661.74 L2114.57 1660.86 L2118.34 1660.79 L2122.1 1659.64 L2125.86 1659.52 L2129.62 1661.38 L2133.38 1661.2 L2137.14 1660.34 L2140.9 1661.11 L2144.66 1660.74 L2148.42 1662.93 L2152.18 1662.62 L2155.94 1663.99 L2159.7 1664.95 L2163.46 1663.14 L2167.22 1664.99 L2170.98 1666.73 L2174.74 1665.46 L2178.5 1666.57 L2182.26 1666.68 L2186.02 1668.19 L2189.78 1667.76 L2193.54 1666.78 L2197.3 1666.97 L2201.06 1664.46 L2204.82 1663.61 L2208.58 1663.45 L2212.34 1662.61 L2216.1 1662.92 L2219.86 1660.99 L2223.62 1661.05 L2227.38 1659.22 L2231.14 1661.66 L2234.9 1660.02 L2238.66 1661.43 L2242.42 1662.4 L2246.18 1663.65 L2249.94 1663.45 L2253.71 1665.14 L2257.47 1666.45 L2261.23 1666.88 L2264.99 1666.66 L2268.75 1668.27 L2272.51 1667.54 L2276.27 1669.21 L2280.03 1669.17 L2283.79 1669.23 L2287.55 1672.11 L2291.31 1670.1 L2295.07 1672.58 L2298.83 1672.73 L2302.59 1673.07 L2306.35 1672.58 L2310.11 1672.91 L2313.87 1674.16 L2317.63 1672.9 L2321.39 1674.01 L2325.15 1675.5 L2328.91 1674.92 L2332.67 1674.57 L2336.43 1674.61 L2340.19 1675.69 L2343.95 1676.78 L2347.71 1676.91 L2351.47 1678.18 L2355.23 1676.04 L2358.99 1676.46 L2362.75 1677.98 L2366.51 1678.34 L2370.27 1679.53 L2374.03 1680.16 L2377.79 1678.35 L2381.55 1680.77 L2385.31 1678.85 L2389.08 1680.75 L2392.84 1678.99 L2396.6 1681.5 L2400.36 1680.95 L2404.12 1680.67 L2407.88 1680.28 L2411.64 1682.43 L2415.4 1682.07 L2419.16 1679.76 L2422.92 1679.31 L2426.68 1679.28 L2430.44 1678.44 L2434.2 1676.69 L2437.96 1678.14 L2441.72 1675.85 L2445.48 1678.14 L2449.24 1683.56 L2453 1675.54" fill="none" stroke="#f5df55" stroke-width="2" stroke-linejoin="round"/>
<path d="M1373.8 1796.87 L1377.56 1771.34 L1381.32 1778.34 L1385.08 1778.34 L1388.84 1778.34 L1392.6 1778.34 L1396.36 1778.34 L1400.12 1796.87 L1403.88 1805.06 L1407.64 1771.34 L1411.4 1805.06 L1415.16 1773.9 L1418.92 1783.77 L1422.68 1796.87 L1426.44 1765.92 L1430.2 1771.34 L1433.96 1788.2 L1437.72 1778.34 L1441.49 1771.34 L1445.25 1765.92 L1449.01 1783.77 L1452.77 1796.87 L1456.53 1771.34 L1460.29 1765.92 L1464.05 1788.2 L1467.81 1761.48 L1471.57 1771.34 L1475.33 1771.34 L1479.09 1765.92 L1482.85 1761.48 L1486.61 1788.2 L1490.37 1778.34 L1494.13 1805.06 L1497.89 1783.77 L1501.65 1771.34 L1505.41 1796.87 L1509.17 1771.34 L1512.93 1765.92 L1516.69 1788.2 L1520.45 1771.34 L1524.21 1771.34 L1527.97 1757.73 L1531.73 1796.87 L1535.49 1765.92 L1539.25 1778.34 L1543.01 1805.06 L1546.77 1796.87 L1550.53 1761.48 L1554.29 1771.34 L1558.05 1771.34 L1561.81 1773.9 L1565.57 1773.9 L1569.33 1778.34 L1573.09 1783.77 L1576.86 1771.34 L1580.62 1783.77 L1584.38 1778.34 L1588.14 1771.34 L1591.9 1805.06 L1595.66 1771.34 L1599.42 1773.9 L1603.18 1773.9 L1606.94 1771.34 L1610.7 1783.77 L1614.46 1757.73 L1618.22 1771.34 L1621.98 1771.34 L1625.74 1771.34 L1629.5 1771.34 L1633.26 1805.06 L1637.02 1796.87 L1640.78 1778.34 L1644.54 1778.34 L1648.3 1788.2 L1652.06 1765.92 L1655.82 1805.06 L1659.58 1771.34 L1663.34 1765.92 L1667.1 1805.06 L1670.86 1761.48 L1674.62 1805.06 L1678.38 1771.34 L1682.14 1771.34 L1685.9 1778.34 L1689.66 1765.92 L1693.42 1773.9 L1697.18 1783.77 L1700.94 1765.92 L1704.7 1788.2 L1708.46 1783.77 L1712.23 1778.34 L1715.99 1788.2 L1719.75 1773.9 L1723.51 1805.06 L1727.27 1788.2 L1731.03 1778.34 L1734.79 1765.92 L1738.55 1778.34 L1742.31 1761.48 L1746.07 1757.73 L1749.83 1771.34 L1753.59 1778.34 L1757.35 1765.92 L1761.11 1796.87 L1764.87 1765.92 L1768.63 1757.73 L1772.39 1765.92 L1776.15 1761.48 L1779.91 1761.48 L1783.67 1771.34 L1787.43 1783.77 L1791.19 1761.48 L1794.95 1757.73 L1798.71 1778.34 L1802.47 1761.48 L1806.23 1773.9 L1809.99 1778.34 L1813.75 1771.34 L1817.51 1796.87 L1821.27 1778.34 L1825.03 1765.92 L1828.79 1778.34 L1832.55 1805.06 L1836.31 1778.34 L1840.07 1805.06 L1843.83 1783.77 L1847.6 1757.73 L1851.36 1765.92 L1855.12 1771.34 L1858.88 1783.77 L1862.64 1788.2 L1866.4 1783.77 L1870.16 1796.87 L1873.92 1773.9 L1877.68 1805.06 L1881.44 1796.87 L1885.2 1788.2 L1888.96 1778.34 L1892.72 1771.34 L1896.48 1783.77 L1900.24 1757.73 L1904 1796.87 L1907.76 1773.9 L1911.52 1805.06 L1915.28 1761.48 L1919.04 1796.87 L1922.8 1771.34 L1926.56 1771.34 L1930.32 1788.2 L1934.08 1788.2 L1937.84 1778.34 L1941.6 1783.77 L1945.36 1761.48 L1949.12 1805.06 L1952.88 1771.34 L1956.64 1796.87 L1960.4 1880 L1964.16 1805.06 L1967.92 1805.06 L1971.68 1796.87 L1975.44 1805.06 L1979.2 1805.06 L1982.97 1788.2 L1986.73 1788.2 L1990.49 1788.2 L1994.25 1778.34 L1998.01 1783.77 L2001.77 1796.87 L2005.53 1788.2 L2009.29 1788.2 L2013.05 1788.2 L2016.81 1783.77 L2020.57 1788.2 L2024.33 1788.2 L2028.09 1783.77 L2031.85 1783.77 L2035.61 1788.2 L2039.37 1778.34 L2043.13 1771.34 L2046.89 1778.34 L2050.65 1788.2 L2054.41 1778.34 L2058.17 1771.34 L2061.93 1771.34 L2065.69 1788.2 L2069.45 1788.2 L2073.21 1805.06 L2076.97 1783.77 L2080.73 1788.2 L2084.49 1761.48 L2088.25 1771.34 L2092.01 1880 L2095.77 1783.77 L2099.53 1788.2 L2103.29 1778.34 L2107.05 1788.2 L2110.81 1788.2 L2114.57 1771.34 L2118.34 1880 L2122.1 1788.2 L2125.86 1771.34 L2129.62 1771.34 L2133.38 1805.06 L2137.14 1761.48 L2140.9 1796.87 L2144.66 1788.2 L2148.42 1771.34 L2152.18 1771.34 L2155.94 1788.2 L2159.7 1805.06 L2163.46 1783.77 L2167.22 1880 L2170.98 1771.34 L2174.74 1805.06 L2178.5 1788.2 L2182.26 1761.48 L2186.02 1788.2 L2189.78 1788.2 L2193.54 1771.34 L2197.3 1778.34 L2201.06 1788.2 L2204.82 1788.2 L2208.58 1796.87 L2212.34 1805.06 L2216.1 1788.2 L2219.86 1771.34 L2223.62 1788.2 L2227.38 1805.06 L2231.14 1805.06 L2234.9 1771.34 L2238.66 1788.2 L2242.42 1778.34 L2246.18 1805.06 L2249.94 1788.2 L2253.71 1771.34 L2257.47 1788.2 L2261.23 1788.2 L2264.99 1761.48 L2268.75 1783.77 L2272.51 1788.2 L2276.27 1788.2 L2280.03 1880 L2283.79 1880 L2287.55 1778.34 L2291.31 1788.2 L2295.07 1771.34 L2298.83 1783.77 L2302.59 1805.06 L2306.35 1783.77 L2310.11 1788.2 L2313.87 1788.2 L2317.63 1788.2 L2321.39 1771.34 L2325.15 1778.34 L2328.91 1788.2 L2332.67 1778.34 L2336.43 1805.06 L2340.19 1788.2 L2343.95 1778.34 L2347.71 1788.2 L2351.47 1788.2 L2355.23 1796.87 L2358.99 1788.2 L2362.75 1783.77 L2366.51 1778.34 L2370.27 1778.34 L2374.03 1880 L2377.79 1788.2 L2381.55 1788.2 L2385.31 1796.87 L2389.08 1771.34 L2392.84 1880 L2396.6 1805.06 L2400.36 1778.34 L2404.12 1880 L2407.88 1788.2 L2411.64 1796.87 L2415.4 1788.2 L2419.16 1771.34 L2422.92 1796.87 L2426.68 1778.34 L2430.44 1771.34 L2434.2 1778.34 L2437.96 1778.34 L2441.72 1778.34 L2445.48 1805.06 L2449.24 1788.2 L2453 1783.77" fill="none" stroke="#6592eb" stroke-width="2" stroke-linejoin="round" clip-path="url(#pcClip)"/>
<path d="M1373.8 1796.87 L1377.56 1771.34 L1381.32 1787.01 L1385.08 1817.48 L1388.84 1783.77 L1392.6 1787.01 L1396.36 1778.34 L1400.12 1796.87 L1403.88 1805.06 L1407.64 1880 L1411.4 1813.73 L1415.16 1782.58 L1418.92 1783.77 L1422.68 1802.3 L1426.44 1771.34 L1430.2 1771.34 L1433.96 1788.2 L1437.72 1805.06 L1441.49 1783.77 L1445.25 1765.92 L1449.01 1789.19 L1452.77 1796.87 L1456.53 1780.02 L1460.29 1774.59 L1464.05 1788.2 L1467.81 1761.48 L1471.57 1776.77 L1475.33 1771.34 L1479.09 1774.59 L1482.85 1761.48 L1486.61 1788.2 L1490.37 1778.34 L1494.13 1805.06 L1497.89 1796.19 L1501.65 1771.34 L1505.41 1796.87 L1509.17 1771.34 L1512.93 1765.92 L1516.69 1793.63 L1520.45 1771.34 L1524.21 1771.34 L1527.97 1766.41 L1531.73 1880 L1535.49 1778.34 L1539.25 1778.34 L1543.01 1805.06 L1546.77 1802.3 L1550.53 1766.91 L1554.29 1776.77 L1558.05 1780.02 L1561.81 1773.9 L1565.57 1773.9 L1569.33 1880 L1573.09 1880 L1576.86 1783.77 L1580.62 1783.77 L1584.38 1778.34 L1588.14 1771.34 L1591.9 1805.06 L1595.66 1771.34 L1599.42 1773.9 L1603.18 1786.33 L1606.94 1783.77 L1610.7 1783.77 L1614.46 1770.16 L1618.22 1805.06 L1621.98 1771.34 L1625.74 1771.34 L1629.5 1771.34 L1633.26 1880 L1637.02 1805.55 L1640.78 1778.34 L1644.54 1787.01 L1648.3 1788.2 L1652.06 1805.06 L1655.82 1810.48 L1659.58 1771.34 L1663.34 1778.34 L1667.1 1817.48 L1670.86 1773.9 L1674.62 1805.06 L1678.38 1783.77 L1682.14 1783.77 L1685.9 1778.34 L1689.66 1765.92 L1693.42 1779.33 L1697.18 1783.77 L1700.94 1765.92 L1704.7 1796.87 L1708.46 1789.19 L1712.23 1783.77 L1715.99 1796.87 L1719.75 1782.58 L1723.51 1805.06 L1727.27 1788.2 L1731.03 1778.34 L1734.79 1765.92 L1738.55 1778.34 L1742.31 1880 L1746.07 1770.16 L1749.83 1780.02 L1753.59 1783.77 L1757.35 1774.59 L1761.11 1796.87 L1764.87 1774.59 L1768.63 1763.16 L1772.39 1765.92 L1776.15 1770.16 L1779.91 1880 L1783.67 1771.34 L1787.43 1789.19 L1791.19 1773.9 L1794.95 1757.73 L1798.71 1778.34 L1802.47 1761.48 L1806.23 1786.33 L1809.99 1778.34 L1813.75 1771.34 L1817.51 1880 L1821.27 1805.06 L1825.03 1817.48 L1828.79 1790.76 L1832.55 1810.48 L1836.31 1783.77 L1840.07 1805.06 L1843.83 1783.77 L1847.6 1757.73 L1851.36 1765.92 L1855.12 1771.34 L1858.88 1783.77 L1862.64 1788.2 L1866.4 1783.77 L1870.16 1817.48 L1873.92 1786.33 L1877.68 1805.06 L1881.44 1796.87 L1885.2 1796.87 L1888.96 1787.01 L1892.72 1771.34 L1896.48 1805.06 L1900.24 1766.41 L1904 1880 L1907.76 1773.9 L1911.52 1805.06 L1915.28 1761.48 L1919.04 1796.87 L1922.8 1880 L1926.56 1880 L1930.32 1880 L1934.08 1793.63 L1937.84 1817.48 L1941.6 1783.77 L1945.36 1761.48 L1949.12 1880 L1952.88 1880 L1956.64 1880 L1960.4 1880 L1964.16 1805.06 L1967.92 1880 L1971.68 1796.87 L1975.44 1817.48 L1979.2 1805.06 L1982.97 1880 L1986.73 1788.2 L1990.49 1817.48 L1994.25 1880 L1998.01 1880 L2001.77 1796.87 L2005.53 1880 L2009.29 1788.2 L2013.05 1793.63 L2016.81 1783.77 L2020.57 1880 L2024.33 1880 L2028.09 1817.48 L2031.85 1880 L2035.61 1880 L2039.37 1778.34 L2043.13 1880 L2046.89 1880 L2050.65 1793.63 L2054.41 1880 L2058.17 1880 L2061.93 1783.77 L2065.69 1800.62 L2069.45 1788.2 L2073.21 1805.06 L2076.97 1817.48 L2080.73 1788.2 L2084.49 1766.91 L2088.25 1771.34 L2092.01 1778.34 L2095.77 1783.77 L2099.53 1788.2 L2103.29 1778.34 L2107.05 1880 L2110.81 1880 L2114.57 1771.34 L2118.34 1880 L2122.1 1793.63 L2125.86 1771.34 L2129.62 1880 L2133.38 1880 L2137.14 1817.48 L2140.9 1880 L2144.66 1793.63 L2148.42 1880 L2152.18 1771.34 L2155.94 1880 L2159.7 1805.06 L2163.46 1783.77 L2167.22 1880 L2170.98 1771.34 L2174.74 1817.48 L2178.5 1788.2 L2182.26 1761.48 L2186.02 1788.2 L2189.78 1817.48 L2193.54 1771.34 L2197.3 1778.34 L2201.06 1817.48 L2204.82 1788.2 L2208.58 1809.3 L2212.34 1880 L2216.1 1778.34 L2219.86 1771.34 L2223.62 1880 L2227.38 1810.48 L2231.14 1817.48 L2234.9 1880 L2238.66 1880 L2242.42 1778.34 L2246.18 1817.48 L2249.94 1788.2 L2253.71 1880 L2257.47 1880 L2261.23 1880 L2264.99 1761.48 L2268.75 1880 L2272.51 1880 L2276.27 1880 L2280.03 1817.48 L2283.79 1880 L2287.55 1783.77 L2291.31 1817.48 L2295.07 1771.34 L2298.83 1783.77 L2302.59 1880 L2306.35 1783.77 L2310.11 1880 L2313.87 1880 L2317.63 1880 L2321.39 1880 L2325.15 1778.34 L2328.91 1880 L2332.67 1778.34 L2336.43 1805.06 L2340.19 1788.2 L2343.95 1880 L2347.71 1880 L2351.47 1817.48 L2355.23 1796.87 L2358.99 1880 L2362.75 1789.19 L2366.51 1778.34 L2370.27 1768.48 L2374.03 1783.77 L2377.79 1800.62 L2381.55 1880 L2385.31 1796.87 L2389.08 1880 L2392.84 1805.06 L2396.6 1817.48 L2400.36 1817.48 L2404.12 1771.34 L2407.88 1880 L2411.64 1880 L2415.4 1817.48 L2419.16 1880 L2422.92 1880 L2426.68 1880 L2430.44 1783.77 L2434.2 1880 L2437.96 1880 L2441.72 1880 L2445.48 1817.48 L2449.24 1788.2 L2453 1773.9" fill="none" stroke="#f19d49" stroke-width="2" stroke-linejoin="round" clip-path="url(#pcClip)"/>
<rect x="1285.6" y="1918" width="28" height="8" rx="4" fill="#85bd72"/>
<text x="1329.6" y="1930.3" font-size="25" fill="#ccccdb" textLength="76.95" lengthAdjust="spacingAndGlyphs" class="a">0.3 μm</text>
<rect x="1428.05" y="1918" width="28" height="8" rx="4" fill="#f5df55"/>
<text x="1472.05" y="1930.3" font-size="25" fill="#ccccdb" textLength="56.09" lengthAdjust="spacingAndGlyphs" class="a">1 μm</text>
<rect x="1549.65" y="1918" width="28" height="8" rx="4" fill="#6592eb"/>
<text x="1593.65" y="1930.3" font-size="25" fill="#ccccdb" textLength="56.09" lengthAdjust="spacingAndGlyphs" class="a">5 μm</text>
<rect x="1671.24" y="1918" width="28" height="8" rx="4" fill="#f19d49"/>
<text x="1715.24" y="1930.3" font-size="25" fill="#ccccdb" textLength="70" lengthAdjust="spacingAndGlyphs" class="a">10 μm</text>
</svg></body></html>
